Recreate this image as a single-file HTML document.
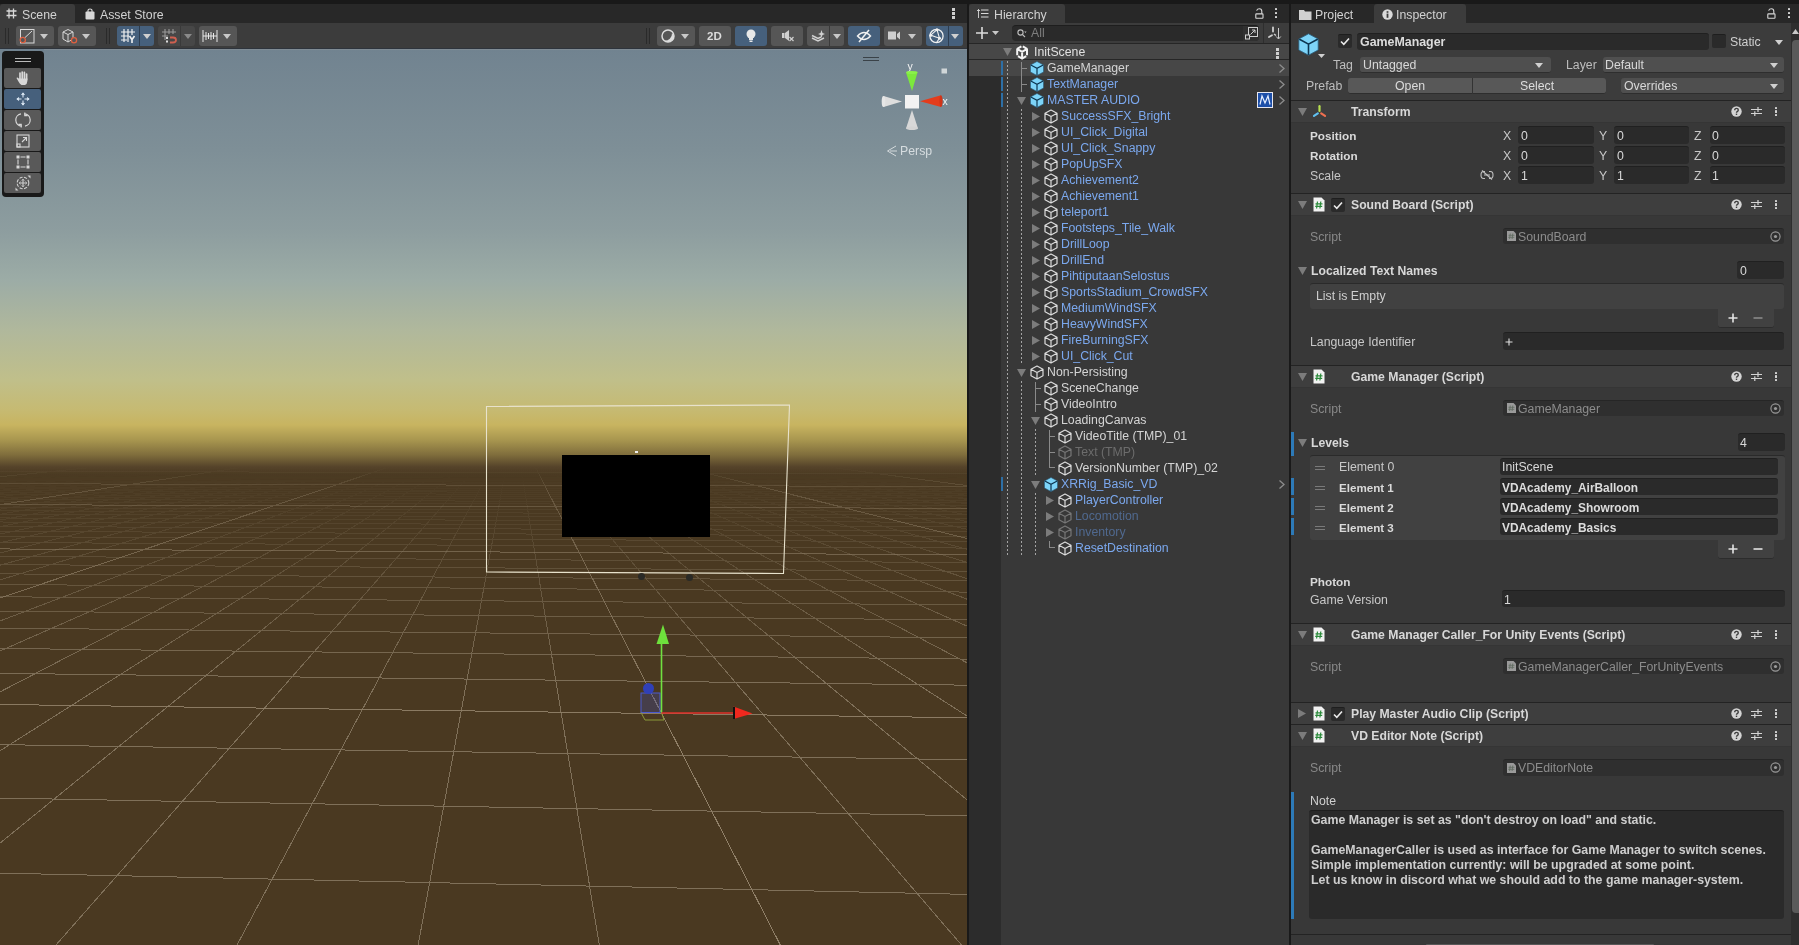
<!DOCTYPE html>
<html><head><meta charset="utf-8">
<style>
*{margin:0;padding:0;box-sizing:border-box}
html,body{width:1799px;height:945px;overflow:hidden;background:#191919;font-family:"Liberation Sans",sans-serif;font-size:12.3px;color:#d2d2d2}
.a{position:absolute}
.t{position:absolute;white-space:nowrap;line-height:16px;will-change:transform}
.btn{position:absolute;top:26px;height:20px;background:#565656;border-radius:3px}
.on,.ov.on{background:#46607c}
.ov{position:absolute;left:4px;width:37px;height:20px;background:#595959;border-radius:2px}
svg{overflow:visible}
</style></head><body>
<!-- ============ SCENE PANEL ============ -->
<div class="a" style="left:0;top:4px;width:967px;height:19px;background:#282828"></div>
<div class="a" style="left:0;top:4px;width:75px;height:19px;background:#3c3c3c;border-radius:3px 3px 0 0"></div>
<svg class="a" style="left:6px;top:8px" width="11" height="11" viewBox="0 0 11 11"><path d="M3 0.5V10.5M7.5 0.5V10.5M0.5 3H10.5M0.5 7.5H10.5" stroke="#d8d8d8" stroke-width="1.3" fill="none"/></svg>
<div class="t" style="left:22px;top:7px">Scene</div>
<svg class="a" style="left:85px;top:8px" width="10" height="12" viewBox="0 0 10 12"><path d="M3 4V2.5Q3 1 5 1Q7 1 7 2.5V4" stroke="#d8d8d8" stroke-width="1.2" fill="none"/><rect x="0.5" y="3.5" width="9" height="8" rx="1" fill="#d8d8d8"/></svg>
<div class="t" style="left:100px;top:7px">Asset Store</div>
<div class="a" style="left:952px;top:8px;width:3px;height:3px;background:#d0d0d0"></div>
<div class="a" style="left:952px;top:12px;width:3px;height:3px;background:#d0d0d0"></div>
<div class="a" style="left:952px;top:16px;width:3px;height:3px;background:#d0d0d0"></div>
<!-- toolbar -->
<div class="a" style="left:0;top:23px;width:967px;height:26px;background:#3c3c3c"></div>
<div class="a" style="left:5px;top:28px;width:1px;height:16px;background:#2a2a2a"></div>
<div class="a" style="left:8px;top:28px;width:1px;height:16px;background:#2a2a2a"></div>
<div class="btn" style="left:16px;width:38px"></div>
<svg class="a" style="left:19px;top:28px" width="16" height="16" viewBox="0 0 16 16"><rect x="1.5" y="1.5" width="13.5" height="13.5" fill="none" stroke="#d8d8d8" stroke-width="1"/><path d="M5.5 10L13 3" stroke="#d8d8d8"/><circle cx="3.8" cy="12" r="2.6" fill="#565656" stroke="#e06040" stroke-width="1.3"/></svg>
<svg class="a" style="left:40px;top:34px" width="8" height="5"><path d="M0 0H8L4 5Z" fill="#c8c8c8"/></svg>
<div class="btn" style="left:58px;width:38px"></div>
<svg class="a" style="left:61px;top:28px" width="16" height="16" viewBox="0 0 16 16"><path d="M2 4L7 1.5L12 4V11L7 14L2 11Z M2 4L7 6.5L12 4 M7 6.5V14" fill="none" stroke="#d8d8d8" stroke-width="1"/><circle cx="13" cy="12.2" r="2.6" fill="#565656" stroke="#e06040" stroke-width="1.3"/></svg>
<svg class="a" style="left:82px;top:34px" width="8" height="5"><path d="M0 0H8L4 5Z" fill="#c8c8c8"/></svg>
<div class="a" style="left:106px;top:28px;width:1px;height:16px;background:#2a2a2a"></div>
<div class="a" style="left:109px;top:28px;width:1px;height:16px;background:#2a2a2a"></div>
<div class="btn on" style="left:117px;width:37px"></div>
<div class="a" style="left:139px;top:26px;width:1px;height:20px;background:#2d3d50"></div>
<svg class="a" style="left:120px;top:28px" width="17" height="16" viewBox="0 0 17 16"><path d="M4 1V14M8 1V14M12 1V7M1 4H15M1 8H9M1 12H7" stroke="#f0f0f0" stroke-width="1.2" fill="none"/><path d="M9.5 8L12 11.5L14.5 8M12 11.5V15" stroke="#f0f0f0" stroke-width="1.6" fill="none"/></svg>
<svg class="a" style="left:143px;top:34px" width="8" height="5"><path d="M0 0H8L4 5Z" fill="#d0d0d0"/></svg>
<div class="btn" style="left:158px;width:37px;background:#474747"></div>
<div class="a" style="left:180px;top:26px;width:1px;height:20px;background:#3a3a3a"></div>
<svg class="a" style="left:161px;top:28px" width="17" height="16" viewBox="0 0 17 16"><path d="M4 1V12M8 1V6M12 1V6M1 4H15M1 8H7" stroke="#9a9a9a" stroke-width="1.1" fill="none"/><rect x="5" y="9" width="2" height="2" fill="#ddd"/><rect x="5" y="12.5" width="2" height="2" fill="#ddd"/><path d="M9 9.5H12Q15 9.5 15 12Q15 14.5 12 14.5H9" stroke="#d06050" stroke-width="1.8" fill="none"/></svg>
<svg class="a" style="left:184px;top:34px" width="8" height="5"><path d="M0 0H8L4 5Z" fill="#8a8a8a"/></svg>
<div class="btn" style="left:199px;width:38px"></div>
<svg class="a" style="left:202px;top:28px" width="16" height="16" viewBox="0 0 16 16"><path d="M1 2V14M15 2V14M1 8H15M4 4V12M6.5 5V11M9 4V12M11.5 5V11" stroke="#e8e8e8" stroke-width="1" fill="none"/></svg>
<svg class="a" style="left:223px;top:34px" width="8" height="5"><path d="M0 0H8L4 5Z" fill="#c8c8c8"/></svg>
<!-- right toolbar -->
<div class="a" style="left:646px;top:28px;width:1px;height:16px;background:#2a2a2a"></div>
<div class="a" style="left:649px;top:28px;width:1px;height:16px;background:#2a2a2a"></div>
<div class="btn" style="left:657px;width:38px"></div>
<svg class="a" style="left:660px;top:28px" width="16" height="16" viewBox="0 0 16 16"><circle cx="8" cy="8" r="6" fill="none" stroke="#dcdcdc" stroke-width="1.5"/><path d="M14 8A6 6 0 0 1 4 12.5A7 7 0 0 0 12 5Z" fill="#dcdcdc"/></svg>
<svg class="a" style="left:681px;top:34px" width="8" height="5"><path d="M0 0H8L4 5Z" fill="#c8c8c8"/></svg>
<div class="btn" style="left:699px;width:32px"></div>
<div class="t" style="left:707px;top:28px;font-weight:bold;font-size:11.5px;color:#dcdcdc">2D</div>
<div class="btn on" style="left:735px;width:32px"></div>
<svg class="a" style="left:745px;top:28px" width="12" height="16" viewBox="0 0 12 16"><circle cx="6" cy="6" r="4.5" fill="#e8e8e8"/><rect x="4" y="9" width="4" height="3" fill="#e8e8e8"/><rect x="4.5" y="12.5" width="3" height="1.5" fill="#e8e8e8"/></svg>
<div class="btn" style="left:771px;width:32px"></div>
<svg class="a" style="left:781px;top:29px" width="14" height="14" viewBox="0 0 14 14"><rect x="1" y="4" width="2.5" height="5" fill="#cfcfcf"/><path d="M4 4L8 1V12L4 9Z" fill="#cfcfcf"/><path d="M8.5 8L12.5 12M12.5 8L8.5 12" stroke="#cfcfcf" stroke-width="1.2"/></svg>
<div class="btn" style="left:807px;width:37px"></div>
<div class="a" style="left:829px;top:26px;width:1px;height:20px;background:#3a3a3a"></div>
<svg class="a" style="left:811px;top:29px" width="15" height="14" viewBox="0 0 15 14"><path d="M1 9L7 12L13 9M1 6.5L7 9.5L10 8" stroke="#d0d0d0" stroke-width="1.5" fill="none"/><path d="M10.5 1L11.5 4L14 5L11.5 6L10.5 9L9.5 6L7 5L9.5 4Z" fill="#d0d0d0"/></svg>
<svg class="a" style="left:833px;top:34px" width="8" height="5"><path d="M0 0H8L4 5Z" fill="#c8c8c8"/></svg>
<div class="btn on" style="left:848px;width:32px"></div>
<svg class="a" style="left:856px;top:29px" width="16" height="14" viewBox="0 0 16 14"><path d="M1.5 7Q8 0 14.5 7Q8 14 1.5 7Z" fill="none" stroke="#f0f0f0" stroke-width="1.4"/><path d="M3 13L13 1" stroke="#f0f0f0" stroke-width="1.5"/></svg>
<div class="btn" style="left:884px;width:38px"></div>
<svg class="a" style="left:888px;top:30px" width="13" height="11" viewBox="0 0 13 11"><rect x="0" y="1.5" width="8" height="8" fill="#cfcfcf"/><path d="M9 4L12 1.5V9.5L9 7Z" fill="#cfcfcf"/></svg>
<svg class="a" style="left:908px;top:34px" width="8" height="5"><path d="M0 0H8L4 5Z" fill="#c8c8c8"/></svg>
<div class="btn on" style="left:926px;width:37px"></div>
<div class="a" style="left:948px;top:26px;width:1px;height:20px;background:#2d3d50"></div>
<svg class="a" style="left:929px;top:28px" width="16" height="16" viewBox="0 0 16 16"><circle cx="7.5" cy="8" r="6.6" fill="none" stroke="#f0f0f0" stroke-width="1.3"/><path d="M1.8 7.2L8 1.6M1.8 7.2L10.5 10.3M8 1.6L10.5 10.3M10.5 10.3L7.5 14.6" fill="none" stroke="#f0f0f0" stroke-width="1.1"/><circle cx="8" cy="1.8" r="1.5" fill="#f0f0f0"/><circle cx="1.8" cy="7.2" r="1.5" fill="#f0f0f0"/><circle cx="10.5" cy="10.3" r="1.5" fill="#f0f0f0"/></svg>
<svg class="a" style="left:951px;top:34px" width="8" height="5"><path d="M0 0H8L4 5Z" fill="#d0d0d0"/></svg>
<!-- scene view -->
<div class="a" id="scene" style="left:0;top:49px;width:967px;height:896px;overflow:hidden;background:linear-gradient(to bottom,#718390 0px,#7e8f97 101px,#8d9d9f 181px,#9caca6 231px,#b0b89c 281px,#c0bf8a 331px,#c6ba72 361px,#c8b460 376px,#a8964f 391px,#7f6d3c 406px,#55432a 418px,#4a3921 426px,#4a3921 896px)">
<svg class="a" style="left:0;top:0" width="967" height="896" viewBox="0 0 967 896">
<defs>
<linearGradient id="gm" x1="0" y1="0" x2="0" y2="896" gradientUnits="userSpaceOnUse">
<stop offset="0" stop-color="#000"/><stop offset="0.4688" stop-color="#000"/><stop offset="0.5246" stop-color="#303030"/><stop offset="0.6027" stop-color="#8a8a8a"/><stop offset="0.7143" stop-color="#fff"/><stop offset="1" stop-color="#fff"/></linearGradient>
<linearGradient id="gM" x1="0" y1="0" x2="0" y2="896" gradientUnits="userSpaceOnUse">
<stop offset="0" stop-color="#000"/><stop offset="0.4665" stop-color="#000"/><stop offset="0.4911" stop-color="#5a5a5a"/><stop offset="0.5804" stop-color="#a8a8a8"/><stop offset="0.7812" stop-color="#fff"/><stop offset="1" stop-color="#fff"/></linearGradient>
<mask id="mm" maskUnits="userSpaceOnUse" x="0" y="0" width="967" height="896"><rect width="967" height="896" fill="url(#gm)"/></mask>
<mask id="mM" maskUnits="userSpaceOnUse" x="0" y="0" width="967" height="896"><rect width="967" height="896" fill="url(#gM)"/></mask>
</defs>
<path mask="url(#mm)" d="M-9081.0 731.4L221.3 386.8M-9013.8 733.5L225.0 386.8M-8945.7 735.6L228.8 386.8M-8876.8 737.8L232.5 386.8M-8807.1 740.0L236.2 386.8M-8736.5 742.2L239.9 386.8M-8665.1 744.5L243.7 386.8M-8592.7 746.7L247.4 386.9M-8519.5 749.0L251.1 386.9M-8370.3 753.8L258.6 386.9M-8294.2 756.1L262.3 386.9M-8217.2 758.6L266.0 386.9M-8139.2 761.0L269.8 386.9M-8060.2 763.5L273.5 386.9M-7980.2 766.0L277.3 386.9M-7899.1 768.6L281.0 386.9M-7817.0 771.2L284.7 386.9M-7733.7 773.8L288.5 386.9M-7563.9 779.2L296.0 386.9M-7477.2 781.9L299.7 386.9M-7389.4 784.7L303.5 386.9M-7300.4 787.5L307.2 386.9M-7210.1 790.3L311.0 386.9M-7118.6 793.2L314.7 386.9M-7025.8 796.1L318.5 386.9M-6931.6 799.1L322.2 386.9M-6836.2 802.1L326.0 386.9M-6641.1 808.2L333.5 386.9M-6541.5 811.4L337.3 386.9M-6440.4 814.6L341.0 386.9M-6337.8 817.8L344.8 386.9M-6233.7 821.1L348.6 386.9M-6128.0 824.4L352.3 386.9M-6020.7 827.8L356.1 386.9M-5911.8 831.2L359.9 386.9M-5801.2 834.7L363.6 386.9M-5574.9 841.9L371.2 386.9M-5459.1 845.5L375.0 386.9M-5341.5 849.2L378.7 386.9M-5222.0 853.0L382.5 386.9M-5100.5 856.8L386.3 386.9M-4977.2 860.7L390.1 386.9M-4851.7 864.6L393.9 386.9M-4724.3 868.7L397.6 386.9M-4594.7 872.7L401.4 386.9M-4329.0 881.1L409.0 386.9M-4192.7 885.4L412.8 386.9M-4054.1 889.8L416.6 386.9M-3913.2 894.2L420.4 386.9M-3769.7 898.7L424.2 386.9M-3623.8 903.3L428.0 386.9M-3475.2 908.0L431.8 386.9M-3324.0 912.8L435.5 386.9M-3170.0 917.6L439.3 387.0M-2853.6 927.6L446.9 387.0M-2691.0 932.7L450.7 387.0M-2525.3 938.0L454.6 387.0M-2356.5 943.3L458.4 387.0M-2184.5 948.7L462.2 387.0M-2009.2 954.2L466.0 387.0M-1830.4 959.9L469.8 387.0M-1648.1 965.6L473.6 387.0M-1462.2 971.5L477.4 387.0M-1079.1 983.5L485.0 387.0M-881.7 989.8L488.9 387.0M-680.1 996.1L492.7 387.0M-474.4 1002.6L496.5 387.0M-264.3 1009.2L500.3 387.0M-49.7 1016.0L504.1 387.0M169.5 1022.9L508.0 387.0M393.5 1030.0L511.8 387.0M622.5 1037.2L515.6 387.0M1095.9 1052.1L523.3 387.0M1340.7 1059.8L527.1 387.0M1591.1 1067.7L530.9 387.0M1847.4 1075.8L534.8 387.0M2109.8 1084.1L538.6 387.0M2378.4 1092.5L542.4 387.0M2653.5 1101.2L546.3 387.0M2935.4 1110.1L550.1 387.0M3224.2 1119.2L553.9 387.0M3824.0 1138.1L561.6 387.0M4135.5 1147.9L565.5 387.0M4455.1 1158.0L569.3 387.0M4783.2 1168.3L573.2 387.0M5120.0 1178.9L577.0 387.0M5466.0 1189.8L580.9 387.0M5821.5 1201.0L584.7 387.0M6187.0 1212.6L588.6 387.0M6562.8 1224.4L592.4 387.0M7347.2 1249.1L600.1 387.0M7756.8 1262.0L604.0 387.0M8178.8 1275.3L607.9 387.0M8613.5 1289.0L611.7 387.0M9061.8 1303.2L615.6 387.0M9524.1 1317.7L619.4 387.0M10001.2 1332.8L623.3 387.0M10493.7 1348.3L627.2 387.1M11002.6 1364.3L631.0 387.1M12072.3 1398.0L638.8 387.1M12634.9 1415.8L642.7 387.1M13217.5 1434.1L646.5 387.1M13821.0 1453.2L650.4 387.1M14446.6 1472.9L654.3 387.1M15095.5 1493.3L658.2 387.1M15769.1 1514.6L662.0 387.1M16468.8 1536.6L665.9 387.1M17196.1 1559.5L669.8 387.1M18740.5 1608.2L677.6 387.1M19561.4 1634.1L681.5 387.1M20417.4 1661.1L685.4 387.1M21311.0 1689.2L689.3 387.1M22244.6 1718.6L693.1 387.1M23220.9 1749.4L697.0 387.1M24243.1 1781.6L700.9 387.1M25314.5 1815.4L704.8 387.1M26438.5 1850.8L708.7 387.1M28861.2 1927.2L716.5 387.1M30169.1 1968.4L720.4 387.1M31548.4 2011.9L724.3 387.1M33005.1 2057.8L728.2 387.1M34546.0 2106.3L732.1 387.1M36178.5 2157.8L736.0 387.1M37911.1 2212.4L740.0 387.1M39753.2 2270.5L743.9 387.1M41715.6 2332.3L747.8 387.1M46051.7 2469.0L755.6 387.1M48455.1 2544.7L759.5 387.1M51039.1 2626.2L763.4 387.1M53824.6 2714.0L767.4 387.1M56836.4 2808.9L771.3 387.1M60103.1 2911.8L775.2 387.1M63658.4 3023.9L779.1 387.1M67542.5 3146.3L783.0 387.1M71803.2 3280.6L787.0 387.1M81696.7 3592.4L794.8 387.1M87485.1 3774.8L798.8 387.1M93969.7 3979.2L802.7 387.1M101284.1 4209.7L806.6 387.1M109598.4 4471.8L810.6 387.1M119132.6 4772.3L814.5 387.1M130176.6 5120.3L818.4 387.2M143119.7 5528.3L822.4 387.2M158498.0 6013.0L826.3 387.2M-446.8 924.5L2242.4 998.6M-364.1 816.1L2000.0 868.1M-308.7 743.4L1841.7 782.8M-269.1 691.4L1730.1 722.7M-216.0 621.7L1583.2 643.7M-197.4 597.3L1532.3 616.3M-182.1 577.3L1490.9 594.0M-169.4 560.6L1456.5 575.4M-158.6 546.4L1427.5 559.8M-149.4 534.3L1402.7 546.5M-141.4 523.8L1381.3 534.9M-134.4 514.6L1362.6 524.9M-128.2 506.5L1346.1 516.0M-117.7 492.8L1318.4 501.1M-113.3 487.0L1306.6 494.7M-109.3 481.7L1296.0 489.0M-105.6 476.9L1286.4 483.8M-102.3 472.5L1277.6 479.1M-99.3 468.5L1269.5 474.8M-96.4 464.8L1262.1 470.8M-93.8 461.4L1255.3 467.1M-91.4 458.3L1249.0 463.7M-87.1 452.6L1237.7 457.6M-85.2 450.0L1232.6 454.9M-83.4 447.7L1227.8 452.3M-81.7 445.4L1223.3 449.9M-80.1 443.3L1219.2 447.6M-78.6 441.3L1215.2 445.5M-77.1 439.5L1211.5 443.5M-75.8 437.7L1208.0 441.6M-74.5 436.1L1204.7 439.8M-72.2 433.0L1198.6 436.6M-71.1 431.6L1195.7 435.0M-70.1 430.2L1193.0 433.6M-69.1 428.9L1190.5 432.2M-68.1 427.7L1188.0 430.9M-67.3 426.5L1185.7 429.6M-66.4 425.4L1183.5 428.4M-65.6 424.3L1181.4 427.3M-64.8 423.3L1179.3 426.2M-63.3 421.4L1175.5 424.1M-62.6 420.5L1173.7 423.2M-62.0 419.6L1172.0 422.2M-61.3 418.8L1170.3 421.3M-60.7 417.9L1168.7 420.5M-60.1 417.2L1167.2 419.7M-59.6 416.4L1165.7 418.9M-59.0 415.7L1164.3 418.1M-58.5 415.0L1162.9 417.4M-57.5 413.7L1160.3 415.9M-57.0 413.1L1159.1 415.3M-56.5 412.5L1157.9 414.6M-56.1 411.9L1156.7 414.0M-55.7 411.3L1155.6 413.4M-55.2 410.7L1154.5 412.8M-54.8 410.2L1153.4 412.2M-54.4 409.7L1152.4 411.7M-54.0 409.2L1151.4 411.2M-53.3 408.2L1149.5 410.1M-53.0 407.8L1148.6 409.7M-52.6 407.3L1147.7 409.2M-52.3 406.9L1146.9 408.7M-52.0 406.5L1146.0 408.3M-51.7 406.1L1145.2 407.8M-51.4 405.7L1144.4 407.4M-51.1 405.3L1143.7 407.0M-50.8 404.9L1142.9 406.6M-50.2 404.2L1141.5 405.8M-49.9 403.8L1140.8 405.4M-49.7 403.5L1140.1 405.1M-49.4 403.1L1139.4 404.7M-49.2 402.8L1138.8 404.4M-48.9 402.5L1138.2 404.0M-48.7 402.2L1137.5 403.7M-48.5 401.9L1136.9 403.4M-48.2 401.6L1136.4 403.1M-47.8 401.0L1135.2 402.4M-47.6 400.7L1134.7 402.2M-47.4 400.4L1134.1 401.9M-47.2 400.2L1133.6 401.6M-47.0 399.9L1133.1 401.3M-46.8 399.7L1132.6 401.0M-46.6 399.4L1132.1 400.8M-46.4 399.2L1131.6 400.5M-46.2 398.9L1131.2 400.3M-45.9 398.5L1130.3 399.8M-45.7 398.2L1129.8 399.5M-45.5 398.0L1129.4 399.3M-45.4 397.8L1129.0 399.1M-45.2 397.6L1128.5 398.8M-45.1 397.4L1128.1 398.6M-44.9 397.2L1127.7 398.4M-44.7 397.0L1127.3 398.2M-44.6 396.8L1126.9 398.0M-44.3 396.4L1126.2 397.6M-44.2 396.2L1125.8 397.4M-44.0 396.0L1125.5 397.2M-43.9 395.9L1125.1 397.0M-43.8 395.7L1124.8 396.8M-43.6 395.5L1124.4 396.6M-43.5 395.3L1124.1 396.5M-43.4 395.2L1123.8 396.3M-43.2 395.0L1123.4 396.1M-43.0 394.7L1122.8 395.8M-42.9 394.5L1122.5 395.6M-42.8 394.4L1122.2 395.4M-42.7 394.2L1121.9 395.3M-42.5 394.1L1121.6 395.1M-42.4 393.9L1121.3 395.0M-42.3 393.8L1121.1 394.8M-42.2 393.7L1120.8 394.7M-42.1 393.5L1120.5 394.5M-41.9 393.2L1120.0 394.2M-41.8 393.1L1119.7 394.1M-41.7 393.0L1119.5 394.0M-41.6 392.9L1119.2 393.8M-41.5 392.7L1118.9 393.7M-41.4 392.6L1118.7 393.6M-41.3 392.5L1118.5 393.4M-41.2 392.4L1118.2 393.3M-41.1 392.2L1118.0 393.2M-41.0 392.0L1117.5 392.9M-40.9 391.9L1117.3 392.8M-40.8 391.8L1117.1 392.7M-40.7 391.7L1116.9 392.6M-40.6 391.6L1116.6 392.4M-40.5 391.5L1116.4 392.3M-40.4 391.3L1116.2 392.2M-40.4 391.2L1116.0 392.1M-40.3 391.1L1115.8 392.0M-40.1 390.9L1115.4 391.8M-40.1 390.8L1115.2 391.7M-40.0 390.7L1115.0 391.6M-39.9 390.6L1114.8 391.5M-39.8 390.5L1114.7 391.4M-39.8 390.5L1114.5 391.3M-39.7 390.4L1114.3 391.2M-39.6 390.3L1114.1 391.1M-39.6 390.2L1113.9 391.0M-39.4 390.0L1113.6 390.8M-39.4 389.9L1113.4 390.7M-39.3 389.8L1113.2 390.6M-39.2 389.7L1113.1 390.5M-39.2 389.7L1112.9 390.4M-39.1 389.6L1112.7 390.3M-39.0 389.5L1112.6 390.3M-39.0 389.4L1112.4 390.2M-38.9 389.3L1112.3 390.1M-38.8 389.2L1111.9 389.9M-38.7 389.1L1111.8 389.8M-38.7 389.0L1111.6 389.8M-38.6 388.9L1111.5 389.7M-38.6 388.9L1111.3 389.6M-38.5 388.8L1111.2 389.5M-38.4 388.7L1111.1 389.4M-38.4 388.6L1110.9 389.4M-38.3 388.6L1110.8 389.3M-38.2 388.4L1110.5 389.1M-38.2 388.4L1110.4 389.1M-38.1 388.3L1110.2 389.0M-38.1 388.2L1110.1 388.9M-38.0 388.2L1110.0 388.8M-38.0 388.1L1109.8 388.8M-37.9 388.0L1109.7 388.7M-37.9 388.0L1109.6 388.6M-37.8 387.9L1109.5 388.6M-37.7 387.8L1109.2 388.4M-37.7 387.7L1109.1 388.4M-37.6 387.7L1109.0 388.3M-37.6 387.6L1108.8 388.2M-37.5 387.5L1108.7 388.2M-37.5 387.5L1108.6 388.1M-37.5 387.4L1108.5 388.1M-37.4 387.4L1108.4 388.0M-37.4 387.3L1108.3 387.9M-37.3 387.2L1108.0 387.8M-37.2 387.1L1107.9 387.8M-37.2 387.1L1107.8 387.7M-37.2 387.0L1107.7 387.6M-37.1 387.0L1107.6 387.6M-37.1 386.9L1107.5 387.5M-37.0 386.9L1107.4 387.5M-37.0 386.8L1107.3 387.4M-36.9 386.8L1107.2 387.4" stroke="#7f7059" stroke-width="1" fill="none" shape-rendering="crispEdges"/>
<path mask="url(#mM)" d="M-9147.5 729.3L217.6 386.8M-8445.4 751.4L254.8 386.9M-7649.4 776.5L292.2 386.9M-6739.4 805.2L329.8 386.9M-5689.0 838.3L367.4 386.9M-4462.9 876.9L405.2 386.9M-3013.3 922.6L443.1 387.0M-1272.6 977.5L481.2 387.0M856.5 1044.6L519.4 387.0M3520.4 1128.5L557.8 387.0M6949.4 1236.6L596.3 387.0M11528.4 1380.9L634.9 387.1M17952.8 1583.4L673.7 387.1M27619.3 1888.0L712.6 387.1M43810.5 2398.3L751.7 387.1M76497.9 3428.5L790.9 387.1M177070.1 6598.3L830.3 387.2M-239.2 652.2L1647.2 678.1M-122.7 499.2L1331.5 508.1M-89.2 455.3L1243.1 460.5M-73.3 434.5L1201.5 438.2M-64.0 422.3L1177.4 425.1M-58.0 414.3L1161.6 416.6M-53.7 408.7L1150.4 410.6M-50.5 404.5L1142.2 406.2M-48.0 401.3L1135.8 402.8M-46.1 398.7L1130.7 400.0M-44.5 396.6L1126.6 397.8M-43.1 394.9L1123.1 395.9M-42.0 393.4L1120.2 394.4M-41.0 392.1L1117.8 393.0M-40.2 391.0L1115.6 391.9M-39.5 390.1L1113.7 390.9M-38.8 389.2L1112.1 390.0M-38.3 388.5L1110.6 389.2M-37.8 387.8L1109.3 388.5M-37.3 387.2L1108.2 387.9" stroke="#908068" stroke-width="1" fill="none" shape-rendering="crispEdges"/>
</svg>
<!-- canvas frame -->
<svg class="a" style="left:0;top:0" width="967" height="896"><path d="M486.5 357.5L789.5 356L783.5 524.5L486.5 523Z" fill="none" stroke="#e8e2cc" stroke-width="1.1"/></svg>
<div class="a" style="left:562px;top:406px;width:148px;height:82px;background:#000"></div>
<div class="a" style="left:635px;top:402px;width:3px;height:2px;background:#eee"></div>
<div class="a" style="left:638px;top:524px;width:7px;height:7px;border-radius:50%;background:#2a2a26"></div>
<div class="a" style="left:686px;top:525px;width:7px;height:7px;border-radius:50%;background:#2a2a26"></div>
<!-- transform gizmo -->
<svg class="a" style="left:0;top:0" width="967" height="896">
<rect x="641" y="644" width="19" height="19.5" fill="rgba(60,80,200,0.25)" stroke="#4a5ad0" stroke-width="1"/>
<circle cx="648.5" cy="639.5" r="5.5" fill="#3040b8"/>
<path d="M641 663.5L645 671H664L661.5 663.5" fill="none" stroke="#8a9a3a" stroke-width="1"/>
<path d="M661.5 663.5V595" stroke="#70e040" stroke-width="1.6"/>
<path d="M663 575.5L669 595H656.5Z" fill="#6ee03c"/>
<path d="M661.5 664H734" stroke="#e0302a" stroke-width="1.6"/>
<path d="M733.5 657.5L752.5 664.5L733.5 670Z" fill="#f0281e"/>
<path d="M734 658V670" stroke="#111" stroke-width="2"/>
</svg>
<!-- orientation gizmo -->
<div class="a" style="left:863px;top:7.5px;width:16px;height:1.2px;background:#3a4248"></div>
<div class="a" style="left:863px;top:10.8px;width:16px;height:1.2px;background:#3a4248"></div>
<svg class="a" style="left:870px;top:10px;will-change:transform" width="90" height="110" viewBox="870 59 90 110">
<text x="907.5" y="70" font-family="Liberation Sans" font-size="10.5" fill="#f4f4f4">y</text>
<rect x="941.5" y="68.5" width="5.5" height="5" fill="#d0d6d8"/>
<path d="M906 72.5L912 91L917.5 72.5Z" fill="#7ce83c"/><ellipse cx="911.8" cy="72.5" rx="5.8" ry="1.6" fill="#8af04a"/>
<rect x="905" y="95" width="14" height="13.5" fill="#f2f2f2"/>
<path d="M920 101.3L941 95.2V107Z" fill="#e43c1c"/><ellipse cx="941" cy="101.1" rx="1.6" ry="5.9" fill="#d03418"/>
<text x="942.5" y="104.5" font-family="Liberation Sans" font-size="10.5" fill="#f4f4f4">x</text>
<path d="M902 101.5L883.5 96V107Z" fill="#dedede"/><ellipse cx="883.5" cy="101.5" rx="1.8" ry="5.5" fill="#e6e6e6"/>
<path d="M912 110L906 128.5H918Z" fill="#d8d8d8"/><ellipse cx="912" cy="128.3" rx="6" ry="1.8" fill="#d4d4d4"/>
</svg>
<svg class="a" style="left:886px;top:96px" width="12" height="12" viewBox="0 0 12 12"><path d="M10 1L1.5 6L10 11M4 6H11" stroke="#d4dadc" stroke-width="1" fill="none"/></svg>
<div class="t" style="left:899.5px;top:94px;color:#d6dcdf;font-size:12.3px">Persp</div>
<!-- overlay tools -->
<div class="a" style="left:2px;top:2px;width:42px;height:146px;background:#191919;border-radius:4px"></div>
<div class="a" style="left:15px;top:9px;width:16px;height:1px;background:#bbb"></div>
<div class="a" style="left:15px;top:12px;width:16px;height:1px;background:#bbb"></div>
<div class="ov" style="top:19px"></div>
<div class="ov on" style="top:40px"></div>
<div class="ov" style="top:61px"></div>
<div class="ov" style="top:82px"></div>
<div class="ov" style="top:103px"></div>
<div class="ov" style="top:124px"></div>
<svg class="a" style="left:15px;top:21px" width="16" height="16" viewBox="0 0 16 16"><path d="M5 3V9M7.2 2V8.5M9.4 2.4V8.5M11.6 4V9.5" stroke="#d8d8d8" stroke-width="1.7" stroke-linecap="round"/><path d="M4.2 8.5H12.4V11Q12.2 14 10 15H6.5Q4.8 14 3.6 11.8L1.6 8.2Q1.5 7.3 2.4 7.4Q3.2 7.6 4.2 9Z" fill="#d8d8d8"/></svg>
<svg class="a" style="left:15px;top:42px" width="16" height="16" viewBox="0 0 16 16"><path d="M8 3.5V6.5M8 9.5V12.5M3.5 8H6.5M9.5 8H12.5" stroke="#dce8f4" stroke-width="1.1"/><path d="M6.6 3.6L8 1.8L9.4 3.6ZM6.6 12.4L8 14.2L9.4 12.4ZM3.6 6.6L1.8 8L3.6 9.4ZM12.4 6.6L14.2 8L12.4 9.4Z" fill="none" stroke="#dce8f4" stroke-width="1" stroke-linejoin="round"/></svg>
<svg class="a" style="left:15px;top:63px" width="16" height="16" viewBox="0 0 16 16"><path d="M6.5 14.2A6.2 6.2 0 0 1 6 1.9" stroke="#d8d8d8" stroke-width="1.2" fill="none"/><path d="M9.5 1.8A6.2 6.2 0 0 1 10 14.1" stroke="#d8d8d8" stroke-width="1.2" fill="none"/><path d="M9.8 0.6V3.6H12.6" stroke="#d8d8d8" stroke-width="1.2" fill="none"/><path d="M6.2 15.4V12.4H3.4" stroke="#d8d8d8" stroke-width="1.2" fill="none"/></svg>
<svg class="a" style="left:15px;top:84px" width="16" height="16" viewBox="0 0 16 16"><rect x="2" y="2" width="12" height="12" fill="none" stroke="#d8d8d8" stroke-width="1.1"/><rect x="2" y="11" width="3" height="3" fill="none" stroke="#d8d8d8" stroke-width="1.1"/><path d="M7 9L11.5 4.5M8 4.5H11.5V8" stroke="#d8d8d8" stroke-width="1.1" fill="none"/></svg>
<svg class="a" style="left:15px;top:105px" width="16" height="16" viewBox="0 0 16 16"><rect x="1.5" y="1.5" width="3" height="3" fill="#d8d8d8"/><rect x="11.5" y="1.5" width="3" height="3" fill="#d8d8d8"/><rect x="1.5" y="11.5" width="3" height="3" fill="#d8d8d8"/><rect x="11.5" y="11.5" width="3" height="3" fill="#d8d8d8"/><path d="M5.5 3H10.5M5.5 13H10.5M3 5.5V10.5M13 5.5V10.5" stroke="#d8d8d8" stroke-width="1.1"/></svg>
<svg class="a" style="left:15px;top:126px" width="16" height="16" viewBox="0 0 16 16"><circle cx="8" cy="8" r="5.8" fill="none" stroke="#cfcfcf" stroke-width="1.1" stroke-dasharray="3.2 1.4"/><path d="M8 4.5V11.5M4.5 8H11.5" stroke="#cfcfcf" stroke-width="1.1"/><path d="M6.8 5.5L8 4.2L9.2 5.5M6.8 10.5L8 11.8L9.2 10.5M5.5 6.8L4.2 8L5.5 9.2M10.5 6.8L11.8 8L10.5 9.2" stroke="#cfcfcf" stroke-width="1" fill="none"/><path d="M0.5 15.5V12.5L3.5 15.5ZM15.5 0.5V3.5L12.5 0.5Z" fill="#cfcfcf"/></svg>
</div>
<div class="a" style="left:0;top:48px;width:967px;height:1px;background:#2e343c"></div>
<div class="a" style="left:44px;top:49px;width:923px;height:1px;background:#7f8b94"></div>
<!-- HIERARCHY HEAD -->
<div class="a" style="left:969px;top:4px;width:320px;height:18.5px;background:#282828"></div>
<div class="a" style="left:969px;top:4px;width:96px;height:18.5px;background:#3c3c3c;border-radius:3px 3px 0 0"></div>
<svg class="a" style="left:977px;top:9px" width="12" height="9" viewBox="0 0 12 9"><path d="M4 1H11.5M4 4.5H11.5M4 8H11.5" stroke="#d8d8d8" stroke-width="1.1"/><path d="M1.5 0V9M0 1.5H3" stroke="#d8d8d8" stroke-width="0.9"/></svg>
<div class="t" style="left:993.5px;top:7px">Hierarchy</div>
<svg class="a" style="left:1254.5px;top:7.5px" width="9" height="11" viewBox="0 0 9 11"><path d="M1.6 2.6Q2.4 0.8 4.4 0.8Q6.8 0.8 6.8 3.2V5.8" fill="none" stroke="#d8d8d8" stroke-width="1.1"/><rect x="0.8" y="5.9" width="7.2" height="4.4" rx="0.6" fill="none" stroke="#d8d8d8" stroke-width="1.1"/></svg>
<div class="a" style="left:1275px;top:8px;width:2.3px;height:2.3px;border-radius:0.6px;background:#d8d8d8"></div>
<div class="a" style="left:1275px;top:12px;width:2.3px;height:2.3px;border-radius:0.6px;background:#d8d8d8"></div>
<div class="a" style="left:1275px;top:16px;width:2.3px;height:2.3px;border-radius:0.6px;background:#d8d8d8"></div>
<div class="a" style="left:969px;top:22.5px;width:320px;height:21px;background:#3c3c3c"></div>
<div class="a" style="left:969px;top:43px;width:320px;height:1px;background:#262626"></div>
<svg class="a" style="left:976px;top:27px" width="12" height="12" viewBox="0 0 12 12"><path d="M6 0V12M0 6H12" stroke="#dcdcdc" stroke-width="1.6"/></svg>
<svg class="a" style="left:992px;top:31px" width="7" height="4"><path d="M0 0H7L3.5 4Z" fill="#c8c8c8"/></svg>
<div class="a" style="left:1012px;top:25px;width:247px;height:16px;background:#2a2a2a;border-radius:4px;border-top:1px solid #1e1e1e"></div>
<div class="a" style="left:1243px;top:25.5px;width:16px;height:15px;background:#303030;border-radius:0 4px 4px 0"></div>
<svg class="a" style="left:1017px;top:29px" width="10" height="9" viewBox="0 0 10 9"><circle cx="3.5" cy="3.5" r="2.6" fill="none" stroke="#c0c0c0" stroke-width="1.1"/><path d="M5.3 5.3L8 8" stroke="#c0c0c0" stroke-width="1.1"/><path d="M7.2 2.5H9.6L8.4 4Z" fill="#c0c0c0"/></svg>
<div class="t" style="left:1031px;top:25px;color:#7e7e7e">All</div>
<svg class="a" style="left:1245px;top:27px" width="13" height="13" viewBox="0 0 13 13"><rect x="3.5" y="0.5" width="9" height="9" fill="none" stroke="#d0d0d0" stroke-width="1"/><rect x="0.5" y="8" width="4" height="4" fill="#303030" stroke="#d0d0d0" stroke-width="1"/><path d="M5.5 7.5L10 3M7 3H10V6" stroke="#d0d0d0" stroke-width="1" fill="none"/></svg>
<div class="a" style="left:1263px;top:23px;width:1px;height:20px;background:#2e2e2e"></div>
<svg class="a" style="left:1268px;top:27px" width="14" height="13" viewBox="0 0 14 13"><path d="M5 0.5V4.5" stroke="#cfcfcf" stroke-width="1.8" stroke-linecap="round"/><path d="M1 10L4 8.3" stroke="#cfcfcf" stroke-width="1.8" stroke-linecap="round"/><path d="M10.5 1V11.5M8.2 9.5L10.5 12L12.8 9.5" stroke="#cfcfcf" stroke-width="1" fill="none"/><path d="M6 7L8 8.5" stroke="#cfcfcf" stroke-width="1.5"/></svg>

<div class="a" style="left:969px;top:44px;width:320px;height:901px;background:#383838"></div>
<div class="a" style="left:969px;top:60px;width:32px;height:885px;background:#2c2c2c"></div>
<div class="a" style="left:969px;top:44px;width:320px;height:15px;background:#474747"></div>
<div class="a" style="left:969px;top:59px;width:320px;height:1px;background:#262626"></div>
<svg class="a" style="left:1003px;top:48px" width="9" height="8" viewBox="0 0 9 8"><path d="M0 0H9L4.5 8Z" fill="#7c7c7c"/></svg>
<svg class="a" style="left:1016px;top:44.5px" width="14" height="15" viewBox="0 0 14 15"><path d="M1.2 3.8L5.4 1.3M6.8 1.3L11 3.8M1.2 3.6V10.2M11 3.6V10.2M2 11.2L6.1 13.7L10.2 11.2M1.2 3.8L6.1 6.8L11 3.8M6.1 6.8V13.7" stroke="#f2f2f2" stroke-width="2" fill="none"/></svg>
<div class="t" style="left:1033.8px;top:43.5px;color:#e0e0e0">InitScene</div>
<div class="a" style="left:1276px;top:48px;width:2.5px;height:2.5px;background:#d0d0d0"></div><div class="a" style="left:1276px;top:52px;width:2.5px;height:2.5px;background:#d0d0d0"></div><div class="a" style="left:1276px;top:56px;width:2.5px;height:2.5px;background:#d0d0d0"></div>
<div class="a" style="left:969px;top:60px;width:320px;height:16px;background:#474747"></div>
<div class="a" style="left:1001px;top:61px;width:2px;height:14px;background:#2d6fa6"></div>
<div class="a" style="left:1001px;top:77px;width:2px;height:14px;background:#2d6fa6"></div>
<div class="a" style="left:1001px;top:93px;width:2px;height:14px;background:#2d6fa6"></div>
<div class="a" style="left:1001px;top:477px;width:2px;height:14px;background:#2d6fa6"></div>
<div class="a" style="left:1007px;top:61px;width:1px;height:495px;background:repeating-linear-gradient(#a4a4a4 0 2px,transparent 2px 4px)"></div>
<div class="a" style="left:1021px;top:109px;width:1px;height:255px;background:repeating-linear-gradient(#a4a4a4 0 2px,transparent 2px 4px)"></div>
<div class="a" style="left:1021px;top:381px;width:1px;height:175px;background:repeating-linear-gradient(#a4a4a4 0 2px,transparent 2px 4px)"></div>
<div class="a" style="left:1035px;top:429px;width:1px;height:47px;background:repeating-linear-gradient(#a4a4a4 0 2px,transparent 2px 4px)"></div>
<div class="a" style="left:1035px;top:493px;width:1px;height:63px;background:repeating-linear-gradient(#a4a4a4 0 2px,transparent 2px 4px)"></div>
<div class="a" style="left:1021px;top:62px;width:1px;height:30px;background:#8a8a8a"></div>
<div class="a" style="left:1021px;top:68px;width:6px;height:1px;background:#8a8a8a"></div>
<div class="a" style="left:1021px;top:84px;width:6px;height:1px;background:#8a8a8a"></div>
<div class="a" style="left:1035px;top:382px;width:1px;height:30px;background:#8a8a8a"></div>
<div class="a" style="left:1035px;top:388px;width:6px;height:1px;background:#8a8a8a"></div>
<div class="a" style="left:1035px;top:404px;width:6px;height:1px;background:#8a8a8a"></div>
<div class="a" style="left:1049px;top:430px;width:1px;height:38px;background:#8a8a8a"></div>
<div class="a" style="left:1049px;top:436px;width:6px;height:1px;background:#8a8a8a"></div>
<div class="a" style="left:1049px;top:452px;width:6px;height:1px;background:#8a8a8a"></div>
<div class="a" style="left:1049px;top:467px;width:6px;height:1px;background:#8a8a8a"></div>
<div class="a" style="left:1049px;top:541px;width:1px;height:7px;background:#8a8a8a"></div>
<div class="a" style="left:1049px;top:547px;width:6px;height:1px;background:#8a8a8a"></div>
<svg class="a" style="left:1030px;top:61px" width="14" height="15" viewBox="0 0 14 15"><path d="M7 0.5L13.5 4V11L7 14.5L0.5 11V4Z" fill="#7dd4f8"/><path d="M0.8 4L7 7.3L13.2 4M7 7.3V14.5" stroke="#0d3550" stroke-width="1.2" fill="none"/><path d="M7 0.5L13.5 4V11L7 14.5L0.5 11V4Z" fill="none" stroke="#2a5a78" stroke-width="0.6"/></svg>
<div class="t" style="left:1046.8px;top:59.5px;color:#d4d4d4">GameManager</div>
<svg class="a" style="left:1279px;top:64px" width="6" height="9" viewBox="0 0 6 9"><path d="M0.5 0.5L5 4.5L0.5 8.5" fill="none" stroke="#8c8c8c" stroke-width="1.3"/></svg>
<svg class="a" style="left:1030px;top:77px" width="14" height="15" viewBox="0 0 14 15"><path d="M7 0.5L13.5 4V11L7 14.5L0.5 11V4Z" fill="#7dd4f8"/><path d="M0.8 4L7 7.3L13.2 4M7 7.3V14.5" stroke="#0d3550" stroke-width="1.2" fill="none"/><path d="M7 0.5L13.5 4V11L7 14.5L0.5 11V4Z" fill="none" stroke="#2a5a78" stroke-width="0.6"/></svg>
<div class="t" style="left:1046.8px;top:75.5px;color:#7ba8ee">TextManager</div>
<svg class="a" style="left:1279px;top:80px" width="6" height="9" viewBox="0 0 6 9"><path d="M0.5 0.5L5 4.5L0.5 8.5" fill="none" stroke="#8c8c8c" stroke-width="1.3"/></svg>
<svg class="a" style="left:1030px;top:93px" width="14" height="15" viewBox="0 0 14 15"><path d="M7 0.5L13.5 4V11L7 14.5L0.5 11V4Z" fill="#7dd4f8"/><path d="M0.8 4L7 7.3L13.2 4M7 7.3V14.5" stroke="#0d3550" stroke-width="1.2" fill="none"/><path d="M7 0.5L13.5 4V11L7 14.5L0.5 11V4Z" fill="none" stroke="#2a5a78" stroke-width="0.6"/></svg>
<svg class="a" style="left:1017px;top:97px" width="9" height="8" viewBox="0 0 9 8"><path d="M0 0H9L4.5 8Z" fill="#7c7c7c"/></svg>
<div class="t" style="left:1046.8px;top:91.5px;color:#7ba8ee">MASTER AUDIO</div>
<svg class="a" style="left:1279px;top:96px" width="6" height="9" viewBox="0 0 6 9"><path d="M0.5 0.5L5 4.5L0.5 8.5" fill="none" stroke="#8c8c8c" stroke-width="1.3"/></svg>
<svg class="a" style="left:1044px;top:108.5px" width="14" height="15" viewBox="0 0 14 15"><path d="M7 1L13 4.3V10.8L7 14L1 10.8V4.3Z M1 4.3L7 7.5L13 4.3 M7 7.5V14" fill="none" stroke="#dcdcdc" stroke-width="1.2" stroke-linejoin="round"/></svg>
<svg class="a" style="left:1032px;top:112px" width="8" height="9" viewBox="0 0 8 9"><path d="M0 0V9L8 4.5Z" fill="#7c7c7c"/></svg>
<div class="t" style="left:1060.8px;top:107.5px;color:#7ba8ee">SuccessSFX_Bright</div>
<svg class="a" style="left:1044px;top:124.5px" width="14" height="15" viewBox="0 0 14 15"><path d="M7 1L13 4.3V10.8L7 14L1 10.8V4.3Z M1 4.3L7 7.5L13 4.3 M7 7.5V14" fill="none" stroke="#dcdcdc" stroke-width="1.2" stroke-linejoin="round"/></svg>
<svg class="a" style="left:1032px;top:128px" width="8" height="9" viewBox="0 0 8 9"><path d="M0 0V9L8 4.5Z" fill="#7c7c7c"/></svg>
<div class="t" style="left:1060.8px;top:123.5px;color:#7ba8ee">UI_Click_Digital</div>
<svg class="a" style="left:1044px;top:140.5px" width="14" height="15" viewBox="0 0 14 15"><path d="M7 1L13 4.3V10.8L7 14L1 10.8V4.3Z M1 4.3L7 7.5L13 4.3 M7 7.5V14" fill="none" stroke="#dcdcdc" stroke-width="1.2" stroke-linejoin="round"/></svg>
<svg class="a" style="left:1032px;top:144px" width="8" height="9" viewBox="0 0 8 9"><path d="M0 0V9L8 4.5Z" fill="#7c7c7c"/></svg>
<div class="t" style="left:1060.8px;top:139.5px;color:#7ba8ee">UI_Click_Snappy</div>
<svg class="a" style="left:1044px;top:156.5px" width="14" height="15" viewBox="0 0 14 15"><path d="M7 1L13 4.3V10.8L7 14L1 10.8V4.3Z M1 4.3L7 7.5L13 4.3 M7 7.5V14" fill="none" stroke="#dcdcdc" stroke-width="1.2" stroke-linejoin="round"/></svg>
<svg class="a" style="left:1032px;top:160px" width="8" height="9" viewBox="0 0 8 9"><path d="M0 0V9L8 4.5Z" fill="#7c7c7c"/></svg>
<div class="t" style="left:1060.8px;top:155.5px;color:#7ba8ee">PopUpSFX</div>
<svg class="a" style="left:1044px;top:172.5px" width="14" height="15" viewBox="0 0 14 15"><path d="M7 1L13 4.3V10.8L7 14L1 10.8V4.3Z M1 4.3L7 7.5L13 4.3 M7 7.5V14" fill="none" stroke="#dcdcdc" stroke-width="1.2" stroke-linejoin="round"/></svg>
<svg class="a" style="left:1032px;top:176px" width="8" height="9" viewBox="0 0 8 9"><path d="M0 0V9L8 4.5Z" fill="#7c7c7c"/></svg>
<div class="t" style="left:1060.8px;top:171.5px;color:#7ba8ee">Achievement2</div>
<svg class="a" style="left:1044px;top:188.5px" width="14" height="15" viewBox="0 0 14 15"><path d="M7 1L13 4.3V10.8L7 14L1 10.8V4.3Z M1 4.3L7 7.5L13 4.3 M7 7.5V14" fill="none" stroke="#dcdcdc" stroke-width="1.2" stroke-linejoin="round"/></svg>
<svg class="a" style="left:1032px;top:192px" width="8" height="9" viewBox="0 0 8 9"><path d="M0 0V9L8 4.5Z" fill="#7c7c7c"/></svg>
<div class="t" style="left:1060.8px;top:187.5px;color:#7ba8ee">Achievement1</div>
<svg class="a" style="left:1044px;top:204.5px" width="14" height="15" viewBox="0 0 14 15"><path d="M7 1L13 4.3V10.8L7 14L1 10.8V4.3Z M1 4.3L7 7.5L13 4.3 M7 7.5V14" fill="none" stroke="#dcdcdc" stroke-width="1.2" stroke-linejoin="round"/></svg>
<svg class="a" style="left:1032px;top:208px" width="8" height="9" viewBox="0 0 8 9"><path d="M0 0V9L8 4.5Z" fill="#7c7c7c"/></svg>
<div class="t" style="left:1060.8px;top:203.5px;color:#7ba8ee">teleport1</div>
<svg class="a" style="left:1044px;top:220.5px" width="14" height="15" viewBox="0 0 14 15"><path d="M7 1L13 4.3V10.8L7 14L1 10.8V4.3Z M1 4.3L7 7.5L13 4.3 M7 7.5V14" fill="none" stroke="#dcdcdc" stroke-width="1.2" stroke-linejoin="round"/></svg>
<svg class="a" style="left:1032px;top:224px" width="8" height="9" viewBox="0 0 8 9"><path d="M0 0V9L8 4.5Z" fill="#7c7c7c"/></svg>
<div class="t" style="left:1060.8px;top:219.5px;color:#7ba8ee">Footsteps_Tile_Walk</div>
<svg class="a" style="left:1044px;top:236.5px" width="14" height="15" viewBox="0 0 14 15"><path d="M7 1L13 4.3V10.8L7 14L1 10.8V4.3Z M1 4.3L7 7.5L13 4.3 M7 7.5V14" fill="none" stroke="#dcdcdc" stroke-width="1.2" stroke-linejoin="round"/></svg>
<svg class="a" style="left:1032px;top:240px" width="8" height="9" viewBox="0 0 8 9"><path d="M0 0V9L8 4.5Z" fill="#7c7c7c"/></svg>
<div class="t" style="left:1060.8px;top:235.5px;color:#7ba8ee">DrillLoop</div>
<svg class="a" style="left:1044px;top:252.5px" width="14" height="15" viewBox="0 0 14 15"><path d="M7 1L13 4.3V10.8L7 14L1 10.8V4.3Z M1 4.3L7 7.5L13 4.3 M7 7.5V14" fill="none" stroke="#dcdcdc" stroke-width="1.2" stroke-linejoin="round"/></svg>
<svg class="a" style="left:1032px;top:256px" width="8" height="9" viewBox="0 0 8 9"><path d="M0 0V9L8 4.5Z" fill="#7c7c7c"/></svg>
<div class="t" style="left:1060.8px;top:251.5px;color:#7ba8ee">DrillEnd</div>
<svg class="a" style="left:1044px;top:268.5px" width="14" height="15" viewBox="0 0 14 15"><path d="M7 1L13 4.3V10.8L7 14L1 10.8V4.3Z M1 4.3L7 7.5L13 4.3 M7 7.5V14" fill="none" stroke="#dcdcdc" stroke-width="1.2" stroke-linejoin="round"/></svg>
<svg class="a" style="left:1032px;top:272px" width="8" height="9" viewBox="0 0 8 9"><path d="M0 0V9L8 4.5Z" fill="#7c7c7c"/></svg>
<div class="t" style="left:1060.8px;top:267.5px;color:#7ba8ee">PihtiputaanSelostus</div>
<svg class="a" style="left:1044px;top:284.5px" width="14" height="15" viewBox="0 0 14 15"><path d="M7 1L13 4.3V10.8L7 14L1 10.8V4.3Z M1 4.3L7 7.5L13 4.3 M7 7.5V14" fill="none" stroke="#dcdcdc" stroke-width="1.2" stroke-linejoin="round"/></svg>
<svg class="a" style="left:1032px;top:288px" width="8" height="9" viewBox="0 0 8 9"><path d="M0 0V9L8 4.5Z" fill="#7c7c7c"/></svg>
<div class="t" style="left:1060.8px;top:283.5px;color:#7ba8ee">SportsStadium_CrowdSFX</div>
<svg class="a" style="left:1044px;top:300.5px" width="14" height="15" viewBox="0 0 14 15"><path d="M7 1L13 4.3V10.8L7 14L1 10.8V4.3Z M1 4.3L7 7.5L13 4.3 M7 7.5V14" fill="none" stroke="#dcdcdc" stroke-width="1.2" stroke-linejoin="round"/></svg>
<svg class="a" style="left:1032px;top:304px" width="8" height="9" viewBox="0 0 8 9"><path d="M0 0V9L8 4.5Z" fill="#7c7c7c"/></svg>
<div class="t" style="left:1060.8px;top:299.5px;color:#7ba8ee">MediumWindSFX</div>
<svg class="a" style="left:1044px;top:316.5px" width="14" height="15" viewBox="0 0 14 15"><path d="M7 1L13 4.3V10.8L7 14L1 10.8V4.3Z M1 4.3L7 7.5L13 4.3 M7 7.5V14" fill="none" stroke="#dcdcdc" stroke-width="1.2" stroke-linejoin="round"/></svg>
<svg class="a" style="left:1032px;top:320px" width="8" height="9" viewBox="0 0 8 9"><path d="M0 0V9L8 4.5Z" fill="#7c7c7c"/></svg>
<div class="t" style="left:1060.8px;top:315.5px;color:#7ba8ee">HeavyWindSFX</div>
<svg class="a" style="left:1044px;top:332.5px" width="14" height="15" viewBox="0 0 14 15"><path d="M7 1L13 4.3V10.8L7 14L1 10.8V4.3Z M1 4.3L7 7.5L13 4.3 M7 7.5V14" fill="none" stroke="#dcdcdc" stroke-width="1.2" stroke-linejoin="round"/></svg>
<svg class="a" style="left:1032px;top:336px" width="8" height="9" viewBox="0 0 8 9"><path d="M0 0V9L8 4.5Z" fill="#7c7c7c"/></svg>
<div class="t" style="left:1060.8px;top:331.5px;color:#7ba8ee">FireBurningSFX</div>
<svg class="a" style="left:1044px;top:348.5px" width="14" height="15" viewBox="0 0 14 15"><path d="M7 1L13 4.3V10.8L7 14L1 10.8V4.3Z M1 4.3L7 7.5L13 4.3 M7 7.5V14" fill="none" stroke="#dcdcdc" stroke-width="1.2" stroke-linejoin="round"/></svg>
<svg class="a" style="left:1032px;top:352px" width="8" height="9" viewBox="0 0 8 9"><path d="M0 0V9L8 4.5Z" fill="#7c7c7c"/></svg>
<div class="t" style="left:1060.8px;top:347.5px;color:#7ba8ee">UI_Click_Cut</div>
<svg class="a" style="left:1030px;top:364.5px" width="14" height="15" viewBox="0 0 14 15"><path d="M7 1L13 4.3V10.8L7 14L1 10.8V4.3Z M1 4.3L7 7.5L13 4.3 M7 7.5V14" fill="none" stroke="#dcdcdc" stroke-width="1.2" stroke-linejoin="round"/></svg>
<svg class="a" style="left:1017px;top:369px" width="9" height="8" viewBox="0 0 9 8"><path d="M0 0H9L4.5 8Z" fill="#7c7c7c"/></svg>
<div class="t" style="left:1046.8px;top:363.5px;color:#d4d4d4">Non-Persisting</div>
<svg class="a" style="left:1044px;top:380.5px" width="14" height="15" viewBox="0 0 14 15"><path d="M7 1L13 4.3V10.8L7 14L1 10.8V4.3Z M1 4.3L7 7.5L13 4.3 M7 7.5V14" fill="none" stroke="#dcdcdc" stroke-width="1.2" stroke-linejoin="round"/></svg>
<div class="t" style="left:1060.8px;top:379.5px;color:#d4d4d4">SceneChange</div>
<svg class="a" style="left:1044px;top:396.5px" width="14" height="15" viewBox="0 0 14 15"><path d="M7 1L13 4.3V10.8L7 14L1 10.8V4.3Z M1 4.3L7 7.5L13 4.3 M7 7.5V14" fill="none" stroke="#dcdcdc" stroke-width="1.2" stroke-linejoin="round"/></svg>
<div class="t" style="left:1060.8px;top:395.5px;color:#d4d4d4">VideoIntro</div>
<svg class="a" style="left:1044px;top:412.5px" width="14" height="15" viewBox="0 0 14 15"><path d="M7 1L13 4.3V10.8L7 14L1 10.8V4.3Z M1 4.3L7 7.5L13 4.3 M7 7.5V14" fill="none" stroke="#dcdcdc" stroke-width="1.2" stroke-linejoin="round"/></svg>
<svg class="a" style="left:1031px;top:417px" width="9" height="8" viewBox="0 0 9 8"><path d="M0 0H9L4.5 8Z" fill="#7c7c7c"/></svg>
<div class="t" style="left:1060.8px;top:411.5px;color:#d4d4d4">LoadingCanvas</div>
<svg class="a" style="left:1058px;top:428.5px" width="14" height="15" viewBox="0 0 14 15"><path d="M7 1L13 4.3V10.8L7 14L1 10.8V4.3Z M1 4.3L7 7.5L13 4.3 M7 7.5V14" fill="none" stroke="#dcdcdc" stroke-width="1.2" stroke-linejoin="round"/></svg>
<div class="t" style="left:1074.8px;top:427.5px;color:#d4d4d4">VideoTitle (TMP)_01</div>
<svg class="a" style="left:1058px;top:444.5px" width="14" height="15" viewBox="0 0 14 15"><path d="M7 1L13 4.3V10.8L7 14L1 10.8V4.3Z M1 4.3L7 7.5L13 4.3 M7 7.5V14" fill="none" stroke="#777777" stroke-width="1.2" stroke-linejoin="round"/></svg>
<div class="t" style="left:1074.8px;top:443.5px;color:#6c6c6c">Text (TMP)</div>
<svg class="a" style="left:1058px;top:460.5px" width="14" height="15" viewBox="0 0 14 15"><path d="M7 1L13 4.3V10.8L7 14L1 10.8V4.3Z M1 4.3L7 7.5L13 4.3 M7 7.5V14" fill="none" stroke="#dcdcdc" stroke-width="1.2" stroke-linejoin="round"/></svg>
<div class="t" style="left:1074.8px;top:459.5px;color:#d4d4d4">VersionNumber (TMP)_02</div>
<svg class="a" style="left:1044px;top:477px" width="14" height="15" viewBox="0 0 14 15"><path d="M7 0.5L13.5 4V11L7 14.5L0.5 11V4Z" fill="#7dd4f8"/><path d="M0.8 4L7 7.3L13.2 4M7 7.3V14.5" stroke="#0d3550" stroke-width="1.2" fill="none"/><path d="M7 0.5L13.5 4V11L7 14.5L0.5 11V4Z" fill="none" stroke="#2a5a78" stroke-width="0.6"/></svg>
<svg class="a" style="left:1031px;top:481px" width="9" height="8" viewBox="0 0 9 8"><path d="M0 0H9L4.5 8Z" fill="#7c7c7c"/></svg>
<div class="t" style="left:1060.8px;top:475.5px;color:#7ba8ee">XRRig_Basic_VD</div>
<svg class="a" style="left:1279px;top:480px" width="6" height="9" viewBox="0 0 6 9"><path d="M0.5 0.5L5 4.5L0.5 8.5" fill="none" stroke="#8c8c8c" stroke-width="1.3"/></svg>
<svg class="a" style="left:1058px;top:492.5px" width="14" height="15" viewBox="0 0 14 15"><path d="M7 1L13 4.3V10.8L7 14L1 10.8V4.3Z M1 4.3L7 7.5L13 4.3 M7 7.5V14" fill="none" stroke="#dcdcdc" stroke-width="1.2" stroke-linejoin="round"/></svg>
<svg class="a" style="left:1046px;top:496px" width="8" height="9" viewBox="0 0 8 9"><path d="M0 0V9L8 4.5Z" fill="#7c7c7c"/></svg>
<div class="t" style="left:1074.8px;top:491.5px;color:#7ba8ee">PlayerController</div>
<svg class="a" style="left:1058px;top:508.5px" width="14" height="15" viewBox="0 0 14 15"><path d="M7 1L13 4.3V10.8L7 14L1 10.8V4.3Z M1 4.3L7 7.5L13 4.3 M7 7.5V14" fill="none" stroke="#777777" stroke-width="1.2" stroke-linejoin="round"/></svg>
<svg class="a" style="left:1046px;top:512px" width="8" height="9" viewBox="0 0 8 9"><path d="M0 0V9L8 4.5Z" fill="#7c7c7c"/></svg>
<div class="t" style="left:1074.8px;top:507.5px;color:#50698f">Locomotion</div>
<svg class="a" style="left:1058px;top:524.5px" width="14" height="15" viewBox="0 0 14 15"><path d="M7 1L13 4.3V10.8L7 14L1 10.8V4.3Z M1 4.3L7 7.5L13 4.3 M7 7.5V14" fill="none" stroke="#777777" stroke-width="1.2" stroke-linejoin="round"/></svg>
<svg class="a" style="left:1046px;top:528px" width="8" height="9" viewBox="0 0 8 9"><path d="M0 0V9L8 4.5Z" fill="#7c7c7c"/></svg>
<div class="t" style="left:1074.8px;top:523.5px;color:#50698f">Inventory</div>
<svg class="a" style="left:1058px;top:540.5px" width="14" height="15" viewBox="0 0 14 15"><path d="M7 1L13 4.3V10.8L7 14L1 10.8V4.3Z M1 4.3L7 7.5L13 4.3 M7 7.5V14" fill="none" stroke="#dcdcdc" stroke-width="1.2" stroke-linejoin="round"/></svg>
<div class="t" style="left:1074.8px;top:539.5px;color:#7ba8ee">ResetDestination</div>
<div class="a" style="left:1257px;top:92px;width:16px;height:16px;background:#1d4fa8;border:1.5px solid #e8e8f0"></div>
<svg class="a" style="left:1259px;top:95px" width="12" height="10" viewBox="0 0 12 10"><path d="M1 9.5L3 1L6 8L9 1L11 9.5" fill="none" stroke="#e8f0ff" stroke-width="1.2"/></svg>
<div class="a" style="left:1291px;top:4px;width:508.00px;height:18.70px;background:#282828;"></div>
<div class="a" style="left:1374px;top:4px;width:92.00px;height:18.70px;background:#3c3c3c;border-radius:3px 3px 0 0"></div>
<svg class="a" style="left:1299px;top:9.5px" width="13" height="10" viewBox="0 0 13 10"><path d="M0 0H5L6 1.5H12.5V10H0Z" fill="#d0d0d0"/></svg>
<div class="t" style="left:1314.80px;top:6.84px;font-size:12.3px;color:#d2d2d2;">Project</div>
<svg class="a" style="left:1381.5px;top:8.5px" width="11" height="11" viewBox="0 0 11 11"><circle cx="5.5" cy="5.5" r="5.2" fill="#dadada"/><rect x="4.6" y="4.6" width="1.8" height="4.2" fill="#3c3c3c"/><rect x="4.6" y="2.2" width="1.8" height="1.6" fill="#3c3c3c"/></svg>
<div class="t" style="left:1396.30px;top:6.84px;font-size:12.3px;color:#d2d2d2;">Inspector</div>
<svg class="a" style="left:1766.5px;top:7.5px" width="9" height="11" viewBox="0 0 9 11"><path d="M1.6 2.6Q2.4 0.8 4.4 0.8Q6.8 0.8 6.8 3.2V5.8" fill="none" stroke="#d8d8d8" stroke-width="1.1"/><rect x="0.8" y="5.9" width="7.2" height="4.4" rx="0.6" fill="none" stroke="#d8d8d8" stroke-width="1.1"/></svg>
<div class="a" style="left:1787.5px;top:8px;width:2.30px;height:2.30px;background:#d8d8d8;border-radius:0.6px"></div>
<div class="a" style="left:1787.5px;top:12px;width:2.30px;height:2.30px;background:#d8d8d8;border-radius:0.6px"></div>
<div class="a" style="left:1787.5px;top:16px;width:2.30px;height:2.30px;background:#d8d8d8;border-radius:0.6px"></div>
<div class="a" style="left:1291px;top:22.7px;width:500.00px;height:922.30px;background:#383838;"></div>
<div class="a" style="left:1291px;top:22.7px;width:500.00px;height:77.30px;background:#3c3c3c;"></div>
<div class="a" style="left:1791px;top:22.7px;width:8.00px;height:922.30px;background:#2e2e2e;"></div>
<svg class="a" style="left:1791.5px;top:29px" width="7" height="5"><path d="M0 5H7L3.5 0Z" fill="#c8c8c8"/></svg>
<div class="a" style="left:1791.5px;top:40px;width:7.50px;height:873.00px;background:#5a5a5a;border-radius:4px 0 0 4px"></div>
<svg class="a" style="left:1298px;top:32.5px" width="21" height="23" viewBox="0 0 21 23"><path d="M10.5 0.8L20.2 6V17L10.5 22.2L0.8 17V6Z" fill="#7dd4f8"/><path d="M1 6L10.5 11.2L20 6M10.5 11.2V22" stroke="#0d3550" stroke-width="1.6" fill="none"/><path d="M10.5 0.8L20.2 6V17L10.5 22.2L0.8 17V6Z" fill="none" stroke="#2a5a78" stroke-width="0.8"/></svg>
<svg class="a" style="left:1318px;top:54px" width="7" height="4"><path d="M0 0H7L3.5 4Z" fill="#d0d0d0"/></svg>
<div class="a" style="left:1337.5px;top:34px;width:14.00px;height:14.00px;background:#2a2a2a;border-radius:2px;border-top:1px solid #1e1e1e"></div>
<svg class="a" style="left:1339.5px;top:37px" width="10" height="9" viewBox="0 0 10 9"><path d="M1 4.5L3.8 7.3L9 1.5" stroke="#e8e8e8" stroke-width="1.6" fill="none"/></svg>
<div class="a" style="left:1357.3px;top:32.5px;width:351.50px;height:17.10px;background:#2a2a2a;border-radius:3px;border-top:1px solid #202020"></div>
<div class="t" style="left:1359.50px;top:33.70px;font-size:12.4px;font-weight:bold;color:#dcdcdc;">GameManager</div>
<div class="a" style="left:1712.3px;top:34px;width:13.70px;height:13.60px;background:#2a2a2a;border-radius:2px;border-top:1px solid #1e1e1e"></div>
<div class="t" style="left:1730.00px;top:33.74px;font-size:12.3px;color:#cfcfcf;">Static</div>
<svg class="a" style="left:1775px;top:39.5px" width="8" height="5"><path d="M0 0H8L4 5Z" fill="#d0d0d0"/></svg>
<div class="t" style="left:1333.30px;top:57.24px;font-size:12.3px;color:#bdbdbd;">Tag</div>
<div class="a" style="left:1360.2px;top:57px;width:190.40px;height:16.40px;background:#4f4f4f;border-radius:3px;border-bottom:1px solid #2e2e2e"></div>
<div class="t" style="left:1363.00px;top:57.24px;font-size:12.3px;color:#d8d8d8;">Untagged</div>
<svg class="a" style="left:1535px;top:62.5px" width="8" height="5"><path d="M0 0H8L4 5Z" fill="#d0d0d0"/></svg>
<div class="t" style="left:1565.50px;top:57.24px;font-size:12.3px;color:#bdbdbd;">Layer</div>
<div class="a" style="left:1602.9px;top:57px;width:180.70px;height:16.40px;background:#4f4f4f;border-radius:3px;border-bottom:1px solid #2e2e2e"></div>
<div class="t" style="left:1605.30px;top:57.24px;font-size:12.3px;color:#d8d8d8;">Default</div>
<svg class="a" style="left:1770px;top:62.5px" width="8" height="5"><path d="M0 0H8L4 5Z" fill="#d0d0d0"/></svg>
<div class="t" style="left:1305.60px;top:77.74px;font-size:12.3px;color:#bdbdbd;">Prefab</div>
<div class="a" style="left:1348px;top:78px;width:124.00px;height:16.30px;background:#585858;border-radius:3px 0 0 3px;border-bottom:1px solid #2e2e2e"></div>
<div class="a" style="left:1472px;top:78px;width:1.00px;height:16.30px;background:#333;"></div>
<div class="a" style="left:1473px;top:78px;width:132.70px;height:16.30px;background:#585858;border-radius:0 3px 3px 0;border-bottom:1px solid #2e2e2e"></div>
<div class="t" style="left:1395.00px;top:77.74px;font-size:12.3px;color:#dcdcdc;">Open</div>
<div class="t" style="left:1520.30px;top:77.74px;font-size:12.3px;color:#dcdcdc;">Select</div>
<div class="a" style="left:1621.2px;top:78px;width:162.40px;height:16.30px;background:#4f4f4f;border-radius:3px;border-bottom:1px solid #2e2e2e"></div>
<div class="t" style="left:1623.80px;top:77.74px;font-size:12.3px;color:#d8d8d8;">Overrides</div>
<svg class="a" style="left:1770px;top:83.5px" width="8" height="5"><path d="M0 0H8L4 5Z" fill="#d0d0d0"/></svg>
<div class="a" style="left:1291px;top:100px;width:500.00px;height:1.00px;background:#232323;"></div>
<div class="a" style="left:1291px;top:101px;width:500.00px;height:21.00px;background:#3e3e3e;"></div>
<div class="a" style="left:1291px;top:122px;width:500.00px;height:1.00px;background:#353535;"></div>
<svg class="a" style="left:1297.5px;top:107.5px" width="9" height="8" viewBox="0 0 9 8"><path d="M0 0H9L4.5 8Z" fill="#7c7c7c"/></svg>
<svg class="a" style="left:1312px;top:105.0px" width="15" height="13" viewBox="0 0 15 13"><path d="M7.5 1.2V6" stroke="#b8e050" stroke-width="2.2" stroke-linecap="round"/><path d="M2 10.8L5.8 8.3" stroke="#60c0f0" stroke-width="2.2" stroke-linecap="round"/><path d="M13 10.8L9.2 8.3" stroke="#f07050" stroke-width="2.2" stroke-linecap="round"/></svg>
<div class="t" style="left:1350.80px;top:104.37px;font-size:12.2px;font-weight:bold;color:#d8d8d8;">Transform</div>
<svg class="a" style="left:1731px;top:106.3px" width="11" height="11" viewBox="0 0 11 11"><circle cx="5.5" cy="5.5" r="5.2" fill="#d4d4d4"/><path d="M3.7 4.2Q3.7 2.4 5.5 2.4Q7.3 2.4 7.3 4Q7.3 5 6.2 5.6Q5.5 6 5.5 6.8" stroke="#3e3e3e" stroke-width="1.4" fill="none"/><rect x="4.8" y="7.6" width="1.4" height="1.4" fill="#3e3e3e"/></svg>
<svg class="a" style="left:1750.5px;top:106.0px" width="11" height="11" viewBox="0 0 11 11"><path d="M0 3.5H11M0 7.5H11" stroke="#d4d4d4" stroke-width="1.2"/><path d="M7 1V6M3.8 5.2V10" stroke="#d4d4d4" stroke-width="1.2"/></svg>
<div class="a" style="left:1775px;top:106.5px;width:2.30px;height:2.30px;background:#d4d4d4;border-radius:0.6px"></div>
<div class="a" style="left:1775px;top:110.3px;width:2.30px;height:2.30px;background:#d4d4d4;border-radius:0.6px"></div>
<div class="a" style="left:1775px;top:114.1px;width:2.30px;height:2.30px;background:#d4d4d4;border-radius:0.6px"></div>
<div class="t" style="left:1309.90px;top:127.93px;font-size:11.75px;font-weight:bold;color:#dadada;">Position</div>
<div class="t" style="left:1502.60px;top:127.74px;font-size:12.3px;color:#c8c8c8;">X</div>
<div class="a" style="left:1518.2px;top:126px;width:75.50px;height:17.60px;background:#2a2a2a;border-radius:3px;border-top:1px solid #202020"></div>
<div class="t" style="left:1520.50px;top:127.74px;font-size:12.3px;color:#d8d8d8;">0</div>
<div class="t" style="left:1598.70px;top:127.74px;font-size:12.3px;color:#c8c8c8;">Y</div>
<div class="a" style="left:1614.2px;top:126px;width:75.10px;height:17.60px;background:#2a2a2a;border-radius:3px;border-top:1px solid #202020"></div>
<div class="t" style="left:1616.50px;top:127.74px;font-size:12.3px;color:#d8d8d8;">0</div>
<div class="t" style="left:1694.00px;top:127.74px;font-size:12.3px;color:#c8c8c8;">Z</div>
<div class="a" style="left:1709.5px;top:126px;width:75.20px;height:17.60px;background:#2a2a2a;border-radius:3px;border-top:1px solid #202020"></div>
<div class="t" style="left:1711.80px;top:127.74px;font-size:12.3px;color:#d8d8d8;">0</div>
<div class="t" style="left:1309.90px;top:147.93px;font-size:11.75px;font-weight:bold;color:#dadada;">Rotation</div>
<div class="t" style="left:1502.60px;top:147.74px;font-size:12.3px;color:#c8c8c8;">X</div>
<div class="a" style="left:1518.2px;top:146px;width:75.50px;height:17.60px;background:#2a2a2a;border-radius:3px;border-top:1px solid #202020"></div>
<div class="t" style="left:1520.50px;top:147.74px;font-size:12.3px;color:#d8d8d8;">0</div>
<div class="t" style="left:1598.70px;top:147.74px;font-size:12.3px;color:#c8c8c8;">Y</div>
<div class="a" style="left:1614.2px;top:146px;width:75.10px;height:17.60px;background:#2a2a2a;border-radius:3px;border-top:1px solid #202020"></div>
<div class="t" style="left:1616.50px;top:147.74px;font-size:12.3px;color:#d8d8d8;">0</div>
<div class="t" style="left:1694.00px;top:147.74px;font-size:12.3px;color:#c8c8c8;">Z</div>
<div class="a" style="left:1709.5px;top:146px;width:75.20px;height:17.60px;background:#2a2a2a;border-radius:3px;border-top:1px solid #202020"></div>
<div class="t" style="left:1711.80px;top:147.74px;font-size:12.3px;color:#d8d8d8;">0</div>
<div class="t" style="left:1309.90px;top:167.74px;font-size:12.3px;color:#c4c4c4;">Scale</div>
<div class="t" style="left:1502.60px;top:167.74px;font-size:12.3px;color:#c8c8c8;">X</div>
<div class="a" style="left:1518.2px;top:166px;width:75.50px;height:17.60px;background:#2a2a2a;border-radius:3px;border-top:1px solid #202020"></div>
<div class="t" style="left:1520.50px;top:167.74px;font-size:12.3px;color:#d8d8d8;">1</div>
<div class="t" style="left:1598.70px;top:167.74px;font-size:12.3px;color:#c8c8c8;">Y</div>
<div class="a" style="left:1614.2px;top:166px;width:75.10px;height:17.60px;background:#2a2a2a;border-radius:3px;border-top:1px solid #202020"></div>
<div class="t" style="left:1616.50px;top:167.74px;font-size:12.3px;color:#d8d8d8;">1</div>
<div class="t" style="left:1694.00px;top:167.74px;font-size:12.3px;color:#c8c8c8;">Z</div>
<div class="a" style="left:1709.5px;top:166px;width:75.20px;height:17.60px;background:#2a2a2a;border-radius:3px;border-top:1px solid #202020"></div>
<div class="t" style="left:1711.80px;top:167.74px;font-size:12.3px;color:#d8d8d8;">1</div>
<svg class="a" style="left:1480px;top:170px" width="14" height="10" viewBox="0 0 14 10"><path d="M5 1.5H3.5Q1 1.5 1 5Q1 8.5 3.5 8.5H5M9 1.5H10.5Q13 1.5 13 5Q13 8.5 10.5 8.5H9M4 5H10" stroke="#c0c0c0" stroke-width="1.1" fill="none"/><path d="M2 0.5L12 9.5" stroke="#c0c0c0" stroke-width="1.1"/></svg>
<div class="a" style="left:1291px;top:193px;width:500.00px;height:1.00px;background:#232323;"></div>
<div class="a" style="left:1291px;top:194px;width:500.00px;height:21.00px;background:#3e3e3e;"></div>
<div class="a" style="left:1291px;top:215px;width:500.00px;height:1.00px;background:#353535;"></div>
<svg class="a" style="left:1297.5px;top:200.5px" width="9" height="8" viewBox="0 0 9 8"><path d="M0 0H9L4.5 8Z" fill="#7c7c7c"/></svg>
<svg class="a" style="left:1313px;top:197.0px" width="12" height="15" viewBox="0 0 12 15"><path d="M0.5 0.5H8.5L11.5 3.5V14.5H0.5Z" fill="#f2f2f2"/><path d="M4.5 4.5L3.6 11.5M7.8 4.5L6.9 11.5M2.5 6.8H9.5M2.2 9.3H9.2" stroke="#2a8a3a" stroke-width="1.2"/></svg>
<div class="a" style="left:1331px;top:197.5px;width:14.00px;height:14.00px;background:#2a2a2a;border-radius:2px;border-top:1px solid #1e1e1e"></div>
<svg class="a" style="left:1333px;top:200.5px" width="10" height="9" viewBox="0 0 10 9"><path d="M1 4.5L3.8 7.3L9 1.5" stroke="#e8e8e8" stroke-width="1.6" fill="none"/></svg>
<div class="t" style="left:1350.80px;top:197.37px;font-size:12.2px;font-weight:bold;color:#d8d8d8;">Sound Board (Script)</div>
<svg class="a" style="left:1731px;top:199.3px" width="11" height="11" viewBox="0 0 11 11"><circle cx="5.5" cy="5.5" r="5.2" fill="#d4d4d4"/><path d="M3.7 4.2Q3.7 2.4 5.5 2.4Q7.3 2.4 7.3 4Q7.3 5 6.2 5.6Q5.5 6 5.5 6.8" stroke="#3e3e3e" stroke-width="1.4" fill="none"/><rect x="4.8" y="7.6" width="1.4" height="1.4" fill="#3e3e3e"/></svg>
<svg class="a" style="left:1750.5px;top:199.0px" width="11" height="11" viewBox="0 0 11 11"><path d="M0 3.5H11M0 7.5H11" stroke="#d4d4d4" stroke-width="1.2"/><path d="M7 1V6M3.8 5.2V10" stroke="#d4d4d4" stroke-width="1.2"/></svg>
<div class="a" style="left:1775px;top:199.5px;width:2.30px;height:2.30px;background:#d4d4d4;border-radius:0.6px"></div>
<div class="a" style="left:1775px;top:203.3px;width:2.30px;height:2.30px;background:#d4d4d4;border-radius:0.6px"></div>
<div class="a" style="left:1775px;top:207.1px;width:2.30px;height:2.30px;background:#d4d4d4;border-radius:0.6px"></div>
<div class="t" style="left:1309.90px;top:228.74px;font-size:12.3px;color:#888888;">Script</div>
<div class="a" style="left:1502.8px;top:227.5px;width:281.20px;height:16.60px;background:#2f2f2f;border-radius:3px;border-top:1px solid #262626"></div>
<svg class="a" style="left:1507px;top:231.0px" width="9" height="10" viewBox="0 0 9 10"><path d="M0 0H6.5L9 2.5V10H0Z" fill="#9a9a9a"/><path d="M3.3 2.5L2.6 8M5.8 2.5L5.1 8M1.5 4.3H7.5M1.3 6.3H7.3" stroke="#5e6a5e" stroke-width="0.8"/></svg>
<div class="t" style="left:1517.80px;top:228.74px;font-size:12.3px;color:#8c8c8c;">SoundBoard</div>
<svg class="a" style="left:1769.5px;top:230.5px" width="11" height="11" viewBox="0 0 11 11"><circle cx="5.5" cy="5.5" r="4.6" fill="none" stroke="#9a9a9a" stroke-width="1.1"/><circle cx="5.5" cy="5.5" r="1.6" fill="#9a9a9a"/></svg>
<svg class="a" style="left:1297.5px;top:267px" width="9" height="8" viewBox="0 0 9 8"><path d="M0 0H9L4.5 8Z" fill="#7c7c7c"/></svg>
<div class="t" style="left:1310.70px;top:262.77px;font-size:12.2px;font-weight:bold;color:#d8d8d8;">Localized Text Names</div>
<div class="a" style="left:1737px;top:261px;width:47.00px;height:17.60px;background:#2a2a2a;border-radius:3px;border-top:1px solid #202020"></div>
<div class="t" style="left:1739.80px;top:262.74px;font-size:12.3px;color:#d8d8d8;">0</div>
<div class="a" style="left:1310px;top:283px;width:474.00px;height:26.20px;background:#414141;border-radius:3px;border-top:1px solid #2a2a2a"></div>
<div class="t" style="left:1316.30px;top:287.94px;font-size:12.3px;color:#cfcfcf;">List is Empty</div>
<div class="a" style="left:1718px;top:309px;width:56.00px;height:19.30px;background:#414141;border-radius:0 0 3px 3px;border-bottom:1px solid #2c2c2c"></div>
<svg class="a" style="left:1728px;top:313px" width="10" height="10" viewBox="0 0 10 10"><path d="M5 0.5V9.5M0.5 5H9.5" stroke="#e4e4e4" stroke-width="1.6"/></svg>
<svg class="a" style="left:1753px;top:313px" width="10" height="10" viewBox="0 0 10 10"><path d="M0.5 5H9.5" stroke="#8a8a8a" stroke-width="1.6"/></svg>
<div class="t" style="left:1309.80px;top:333.54px;font-size:12.3px;color:#c8c8c8;">Language Identifier</div>
<div class="a" style="left:1502.8px;top:332.3px;width:281.20px;height:17.40px;background:#2a2a2a;border-radius:3px;border-top:1px solid #202020"></div>
<svg class="a" style="left:1505px;top:338px" width="8" height="8" viewBox="0 0 8 8"><path d="M4 0.5V7.5M0.5 4H7.5" stroke="#e0e0e0" stroke-width="1.1"/></svg>
<div class="a" style="left:1291px;top:365px;width:500.00px;height:1.00px;background:#232323;"></div>
<div class="a" style="left:1291px;top:366px;width:500.00px;height:21.00px;background:#3e3e3e;"></div>
<div class="a" style="left:1291px;top:387px;width:500.00px;height:1.00px;background:#353535;"></div>
<svg class="a" style="left:1297.5px;top:372.5px" width="9" height="8" viewBox="0 0 9 8"><path d="M0 0H9L4.5 8Z" fill="#7c7c7c"/></svg>
<svg class="a" style="left:1313px;top:369.0px" width="12" height="15" viewBox="0 0 12 15"><path d="M0.5 0.5H8.5L11.5 3.5V14.5H0.5Z" fill="#f2f2f2"/><path d="M4.5 4.5L3.6 11.5M7.8 4.5L6.9 11.5M2.5 6.8H9.5M2.2 9.3H9.2" stroke="#2a8a3a" stroke-width="1.2"/></svg>
<div class="t" style="left:1350.80px;top:369.37px;font-size:12.2px;font-weight:bold;color:#d8d8d8;">Game Manager (Script)</div>
<svg class="a" style="left:1731px;top:371.3px" width="11" height="11" viewBox="0 0 11 11"><circle cx="5.5" cy="5.5" r="5.2" fill="#d4d4d4"/><path d="M3.7 4.2Q3.7 2.4 5.5 2.4Q7.3 2.4 7.3 4Q7.3 5 6.2 5.6Q5.5 6 5.5 6.8" stroke="#3e3e3e" stroke-width="1.4" fill="none"/><rect x="4.8" y="7.6" width="1.4" height="1.4" fill="#3e3e3e"/></svg>
<svg class="a" style="left:1750.5px;top:371.0px" width="11" height="11" viewBox="0 0 11 11"><path d="M0 3.5H11M0 7.5H11" stroke="#d4d4d4" stroke-width="1.2"/><path d="M7 1V6M3.8 5.2V10" stroke="#d4d4d4" stroke-width="1.2"/></svg>
<div class="a" style="left:1775px;top:371.5px;width:2.30px;height:2.30px;background:#d4d4d4;border-radius:0.6px"></div>
<div class="a" style="left:1775px;top:375.3px;width:2.30px;height:2.30px;background:#d4d4d4;border-radius:0.6px"></div>
<div class="a" style="left:1775px;top:379.1px;width:2.30px;height:2.30px;background:#d4d4d4;border-radius:0.6px"></div>
<div class="t" style="left:1309.90px;top:400.74px;font-size:12.3px;color:#888888;">Script</div>
<div class="a" style="left:1502.8px;top:399.5px;width:281.20px;height:16.60px;background:#2f2f2f;border-radius:3px;border-top:1px solid #262626"></div>
<svg class="a" style="left:1507px;top:403.0px" width="9" height="10" viewBox="0 0 9 10"><path d="M0 0H6.5L9 2.5V10H0Z" fill="#9a9a9a"/><path d="M3.3 2.5L2.6 8M5.8 2.5L5.1 8M1.5 4.3H7.5M1.3 6.3H7.3" stroke="#5e6a5e" stroke-width="0.8"/></svg>
<div class="t" style="left:1517.80px;top:400.74px;font-size:12.3px;color:#8c8c8c;">GameManager</div>
<svg class="a" style="left:1769.5px;top:402.5px" width="11" height="11" viewBox="0 0 11 11"><circle cx="5.5" cy="5.5" r="4.6" fill="none" stroke="#9a9a9a" stroke-width="1.1"/><circle cx="5.5" cy="5.5" r="1.6" fill="#9a9a9a"/></svg>
<div class="a" style="left:1291px;top:432.3px;width:2.50px;height:23.30px;background:#2d7ab8;"></div>
<svg class="a" style="left:1297.5px;top:439px" width="9" height="8" viewBox="0 0 9 8"><path d="M0 0H9L4.5 8Z" fill="#7c7c7c"/></svg>
<div class="t" style="left:1310.80px;top:434.87px;font-size:12.2px;font-weight:bold;color:#d8d8d8;">Levels</div>
<div class="a" style="left:1737.6px;top:433.1px;width:47.00px;height:17.60px;background:#2a2a2a;border-radius:3px;border-top:1px solid #202020"></div>
<div class="t" style="left:1739.80px;top:434.84px;font-size:12.3px;color:#d8d8d8;">4</div>
<div class="a" style="left:1310.1px;top:455.4px;width:474.50px;height:84.80px;background:#414141;border-radius:3px;border-top:1px solid #2a2a2a"></div>
<div class="a" style="left:1314.8px;top:465.7px;width:10.20px;height:1.00px;background:#7a7a7a;"></div>
<div class="a" style="left:1314.8px;top:468.7px;width:10.20px;height:1.00px;background:#7a7a7a;"></div>
<div class="t" style="left:1338.90px;top:459.44px;font-size:12.3px;color:#c8c8c8;">Element 0</div>
<div class="a" style="left:1499.5px;top:458.2px;width:278.50px;height:17.00px;background:#2a2a2a;border-radius:3px;border-top:1px solid #202020"></div>
<div class="t" style="left:1501.80px;top:459.44px;font-size:12.3px;color:#d8d8d8;">InitScene</div>
<div class="a" style="left:1314.8px;top:485.7px;width:10.20px;height:1.00px;background:#7a7a7a;"></div>
<div class="a" style="left:1314.8px;top:488.7px;width:10.20px;height:1.00px;background:#7a7a7a;"></div>
<div class="a" style="left:1291px;top:478.2px;width:2.50px;height:17.00px;background:#2d7ab8;"></div>
<div class="t" style="left:1338.90px;top:479.68px;font-size:11.6px;font-weight:bold;color:#dadada;">Element 1</div>
<div class="a" style="left:1499.5px;top:478.2px;width:278.50px;height:17.00px;background:#2a2a2a;border-radius:3px;border-top:1px solid #202020"></div>
<div class="t" style="left:1501.80px;top:479.58px;font-size:11.9px;font-weight:bold;color:#dcdcdc;">VDAcademy_AirBalloon</div>
<div class="a" style="left:1314.8px;top:505.7px;width:10.20px;height:1.00px;background:#7a7a7a;"></div>
<div class="a" style="left:1314.8px;top:508.7px;width:10.20px;height:1.00px;background:#7a7a7a;"></div>
<div class="a" style="left:1291px;top:498.2px;width:2.50px;height:17.00px;background:#2d7ab8;"></div>
<div class="t" style="left:1338.90px;top:499.68px;font-size:11.6px;font-weight:bold;color:#dadada;">Element 2</div>
<div class="a" style="left:1499.5px;top:498.2px;width:278.50px;height:17.00px;background:#2a2a2a;border-radius:3px;border-top:1px solid #202020"></div>
<div class="t" style="left:1501.80px;top:499.58px;font-size:11.9px;font-weight:bold;color:#dcdcdc;">VDAcademy_Showroom</div>
<div class="a" style="left:1314.8px;top:525.7px;width:10.20px;height:1.00px;background:#7a7a7a;"></div>
<div class="a" style="left:1314.8px;top:528.7px;width:10.20px;height:1.00px;background:#7a7a7a;"></div>
<div class="a" style="left:1291px;top:518.2px;width:2.50px;height:17.00px;background:#2d7ab8;"></div>
<div class="t" style="left:1338.90px;top:519.68px;font-size:11.6px;font-weight:bold;color:#dadada;">Element 3</div>
<div class="a" style="left:1499.5px;top:518.2px;width:278.50px;height:17.00px;background:#2a2a2a;border-radius:3px;border-top:1px solid #202020"></div>
<div class="t" style="left:1501.80px;top:519.58px;font-size:11.9px;font-weight:bold;color:#dcdcdc;">VDAcademy_Basics</div>
<div class="a" style="left:1718px;top:540.2px;width:56.00px;height:19.30px;background:#414141;border-radius:0 0 3px 3px;border-bottom:1px solid #2c2c2c"></div>
<svg class="a" style="left:1728px;top:544.2px" width="10" height="10" viewBox="0 0 10 10"><path d="M5 0.5V9.5M0.5 5H9.5" stroke="#e4e4e4" stroke-width="1.6"/></svg>
<svg class="a" style="left:1753px;top:544.2px" width="10" height="10" viewBox="0 0 10 10"><path d="M0.5 5H9.5" stroke="#e4e4e4" stroke-width="1.6"/></svg>
<div class="t" style="left:1309.50px;top:573.73px;font-size:11.75px;font-weight:bold;color:#d8d8d8;">Photon</div>
<div class="t" style="left:1309.50px;top:591.54px;font-size:12.3px;color:#c8c8c8;">Game Version</div>
<div class="a" style="left:1502.2px;top:590.4px;width:282.40px;height:17.00px;background:#2a2a2a;border-radius:3px;border-top:1px solid #202020"></div>
<div class="t" style="left:1504.30px;top:591.54px;font-size:12.3px;color:#d8d8d8;">1</div>
<div class="a" style="left:1291px;top:623px;width:500.00px;height:1.00px;background:#232323;"></div>
<div class="a" style="left:1291px;top:624px;width:500.00px;height:21.00px;background:#3e3e3e;"></div>
<div class="a" style="left:1291px;top:645px;width:500.00px;height:1.00px;background:#353535;"></div>
<svg class="a" style="left:1297.5px;top:630.5px" width="9" height="8" viewBox="0 0 9 8"><path d="M0 0H9L4.5 8Z" fill="#7c7c7c"/></svg>
<svg class="a" style="left:1313px;top:627.0px" width="12" height="15" viewBox="0 0 12 15"><path d="M0.5 0.5H8.5L11.5 3.5V14.5H0.5Z" fill="#f2f2f2"/><path d="M4.5 4.5L3.6 11.5M7.8 4.5L6.9 11.5M2.5 6.8H9.5M2.2 9.3H9.2" stroke="#2a8a3a" stroke-width="1.2"/></svg>
<div class="t" style="left:1350.80px;top:627.37px;font-size:12.2px;font-weight:bold;color:#d8d8d8;">Game Manager Caller_For Unity Events (Script)</div>
<svg class="a" style="left:1731px;top:629.3px" width="11" height="11" viewBox="0 0 11 11"><circle cx="5.5" cy="5.5" r="5.2" fill="#d4d4d4"/><path d="M3.7 4.2Q3.7 2.4 5.5 2.4Q7.3 2.4 7.3 4Q7.3 5 6.2 5.6Q5.5 6 5.5 6.8" stroke="#3e3e3e" stroke-width="1.4" fill="none"/><rect x="4.8" y="7.6" width="1.4" height="1.4" fill="#3e3e3e"/></svg>
<svg class="a" style="left:1750.5px;top:629.0px" width="11" height="11" viewBox="0 0 11 11"><path d="M0 3.5H11M0 7.5H11" stroke="#d4d4d4" stroke-width="1.2"/><path d="M7 1V6M3.8 5.2V10" stroke="#d4d4d4" stroke-width="1.2"/></svg>
<div class="a" style="left:1775px;top:629.5px;width:2.30px;height:2.30px;background:#d4d4d4;border-radius:0.6px"></div>
<div class="a" style="left:1775px;top:633.3px;width:2.30px;height:2.30px;background:#d4d4d4;border-radius:0.6px"></div>
<div class="a" style="left:1775px;top:637.1px;width:2.30px;height:2.30px;background:#d4d4d4;border-radius:0.6px"></div>
<div class="t" style="left:1309.90px;top:658.74px;font-size:12.3px;color:#888888;">Script</div>
<div class="a" style="left:1502.8px;top:657.5px;width:281.20px;height:16.60px;background:#2f2f2f;border-radius:3px;border-top:1px solid #262626"></div>
<svg class="a" style="left:1507px;top:661.0px" width="9" height="10" viewBox="0 0 9 10"><path d="M0 0H6.5L9 2.5V10H0Z" fill="#9a9a9a"/><path d="M3.3 2.5L2.6 8M5.8 2.5L5.1 8M1.5 4.3H7.5M1.3 6.3H7.3" stroke="#5e6a5e" stroke-width="0.8"/></svg>
<div class="t" style="left:1517.80px;top:658.74px;font-size:12.3px;color:#8c8c8c;">GameManagerCaller_ForUnityEvents</div>
<svg class="a" style="left:1769.5px;top:660.5px" width="11" height="11" viewBox="0 0 11 11"><circle cx="5.5" cy="5.5" r="4.6" fill="none" stroke="#9a9a9a" stroke-width="1.1"/><circle cx="5.5" cy="5.5" r="1.6" fill="#9a9a9a"/></svg>
<div class="a" style="left:1291px;top:702px;width:500.00px;height:1.00px;background:#232323;"></div>
<div class="a" style="left:1291px;top:703px;width:500.00px;height:21.00px;background:#3e3e3e;"></div>
<div class="a" style="left:1291px;top:724px;width:500.00px;height:1.00px;background:#353535;"></div>
<svg class="a" style="left:1298px;top:709.0px" width="8" height="9" viewBox="0 0 8 9"><path d="M0 0V9L8 4.5Z" fill="#7c7c7c"/></svg>
<svg class="a" style="left:1313px;top:706.0px" width="12" height="15" viewBox="0 0 12 15"><path d="M0.5 0.5H8.5L11.5 3.5V14.5H0.5Z" fill="#f2f2f2"/><path d="M4.5 4.5L3.6 11.5M7.8 4.5L6.9 11.5M2.5 6.8H9.5M2.2 9.3H9.2" stroke="#2a8a3a" stroke-width="1.2"/></svg>
<div class="a" style="left:1331px;top:706.5px;width:14.00px;height:14.00px;background:#2a2a2a;border-radius:2px;border-top:1px solid #1e1e1e"></div>
<svg class="a" style="left:1333px;top:709.5px" width="10" height="9" viewBox="0 0 10 9"><path d="M1 4.5L3.8 7.3L9 1.5" stroke="#e8e8e8" stroke-width="1.6" fill="none"/></svg>
<div class="t" style="left:1350.80px;top:706.37px;font-size:12.2px;font-weight:bold;color:#d8d8d8;">Play Master Audio Clip (Script)</div>
<svg class="a" style="left:1731px;top:708.3px" width="11" height="11" viewBox="0 0 11 11"><circle cx="5.5" cy="5.5" r="5.2" fill="#d4d4d4"/><path d="M3.7 4.2Q3.7 2.4 5.5 2.4Q7.3 2.4 7.3 4Q7.3 5 6.2 5.6Q5.5 6 5.5 6.8" stroke="#3e3e3e" stroke-width="1.4" fill="none"/><rect x="4.8" y="7.6" width="1.4" height="1.4" fill="#3e3e3e"/></svg>
<svg class="a" style="left:1750.5px;top:708.0px" width="11" height="11" viewBox="0 0 11 11"><path d="M0 3.5H11M0 7.5H11" stroke="#d4d4d4" stroke-width="1.2"/><path d="M7 1V6M3.8 5.2V10" stroke="#d4d4d4" stroke-width="1.2"/></svg>
<div class="a" style="left:1775px;top:708.5px;width:2.30px;height:2.30px;background:#d4d4d4;border-radius:0.6px"></div>
<div class="a" style="left:1775px;top:712.3px;width:2.30px;height:2.30px;background:#d4d4d4;border-radius:0.6px"></div>
<div class="a" style="left:1775px;top:716.1px;width:2.30px;height:2.30px;background:#d4d4d4;border-radius:0.6px"></div>
<div class="a" style="left:1291px;top:724px;width:500.00px;height:1.00px;background:#232323;"></div>
<div class="a" style="left:1291px;top:725px;width:500.00px;height:21.00px;background:#3e3e3e;"></div>
<div class="a" style="left:1291px;top:746px;width:500.00px;height:1.00px;background:#353535;"></div>
<svg class="a" style="left:1297.5px;top:731.5px" width="9" height="8" viewBox="0 0 9 8"><path d="M0 0H9L4.5 8Z" fill="#7c7c7c"/></svg>
<svg class="a" style="left:1313px;top:728.0px" width="12" height="15" viewBox="0 0 12 15"><path d="M0.5 0.5H8.5L11.5 3.5V14.5H0.5Z" fill="#f2f2f2"/><path d="M4.5 4.5L3.6 11.5M7.8 4.5L6.9 11.5M2.5 6.8H9.5M2.2 9.3H9.2" stroke="#2a8a3a" stroke-width="1.2"/></svg>
<div class="t" style="left:1350.80px;top:728.37px;font-size:12.2px;font-weight:bold;color:#d8d8d8;">VD Editor Note (Script)</div>
<svg class="a" style="left:1731px;top:730.3px" width="11" height="11" viewBox="0 0 11 11"><circle cx="5.5" cy="5.5" r="5.2" fill="#d4d4d4"/><path d="M3.7 4.2Q3.7 2.4 5.5 2.4Q7.3 2.4 7.3 4Q7.3 5 6.2 5.6Q5.5 6 5.5 6.8" stroke="#3e3e3e" stroke-width="1.4" fill="none"/><rect x="4.8" y="7.6" width="1.4" height="1.4" fill="#3e3e3e"/></svg>
<svg class="a" style="left:1750.5px;top:730.0px" width="11" height="11" viewBox="0 0 11 11"><path d="M0 3.5H11M0 7.5H11" stroke="#d4d4d4" stroke-width="1.2"/><path d="M7 1V6M3.8 5.2V10" stroke="#d4d4d4" stroke-width="1.2"/></svg>
<div class="a" style="left:1775px;top:730.5px;width:2.30px;height:2.30px;background:#d4d4d4;border-radius:0.6px"></div>
<div class="a" style="left:1775px;top:734.3px;width:2.30px;height:2.30px;background:#d4d4d4;border-radius:0.6px"></div>
<div class="a" style="left:1775px;top:738.1px;width:2.30px;height:2.30px;background:#d4d4d4;border-radius:0.6px"></div>
<div class="t" style="left:1309.90px;top:760.44px;font-size:12.3px;color:#888888;">Script</div>
<div class="a" style="left:1502.8px;top:759.2px;width:281.20px;height:16.60px;background:#2f2f2f;border-radius:3px;border-top:1px solid #262626"></div>
<svg class="a" style="left:1507px;top:762.7px" width="9" height="10" viewBox="0 0 9 10"><path d="M0 0H6.5L9 2.5V10H0Z" fill="#9a9a9a"/><path d="M3.3 2.5L2.6 8M5.8 2.5L5.1 8M1.5 4.3H7.5M1.3 6.3H7.3" stroke="#5e6a5e" stroke-width="0.8"/></svg>
<div class="t" style="left:1517.80px;top:760.44px;font-size:12.3px;color:#8c8c8c;">VDEditorNote</div>
<svg class="a" style="left:1769.5px;top:762.2px" width="11" height="11" viewBox="0 0 11 11"><circle cx="5.5" cy="5.5" r="4.6" fill="none" stroke="#9a9a9a" stroke-width="1.1"/><circle cx="5.5" cy="5.5" r="1.6" fill="#9a9a9a"/></svg>
<div class="a" style="left:1291px;top:791.7px;width:2.50px;height:126.90px;background:#2d7ab8;"></div>
<div class="t" style="left:1309.90px;top:793.24px;font-size:12.3px;color:#d0d0d0;">Note</div>
<div class="a" style="left:1309.3px;top:810px;width:475.10px;height:108.60px;background:#2a2a2a;border-radius:3px;border-top:1px solid #1e1e1e"></div>
<div class="t" style="left:1311.40px;top:812.02px;font-size:12.35px;font-weight:bold;color:#cecece;">Game Manager is set as "don't destroy on load" and static.</div>
<div class="t" style="left:1311.40px;top:842.02px;font-size:12.35px;font-weight:bold;color:#cecece;">GameManagerCaller is used as interface for Game Manager to switch scenes.</div>
<div class="t" style="left:1311.40px;top:857.02px;font-size:12.35px;font-weight:bold;color:#cecece;">Simple implementation currently: will be upgraded at some point.</div>
<div class="t" style="left:1311.40px;top:872.02px;font-size:12.35px;font-weight:bold;color:#cecece;">Let us know in discord what we should add to the game manager-system.</div>
<div class="a" style="left:1291px;top:933.5px;width:500.00px;height:1.00px;background:#232323;"></div>
<div class="a" style="left:1426px;top:943.5px;width:228.00px;height:1.50px;background:#585858;border-radius:3px 3px 0 0"></div>
</body></html>
